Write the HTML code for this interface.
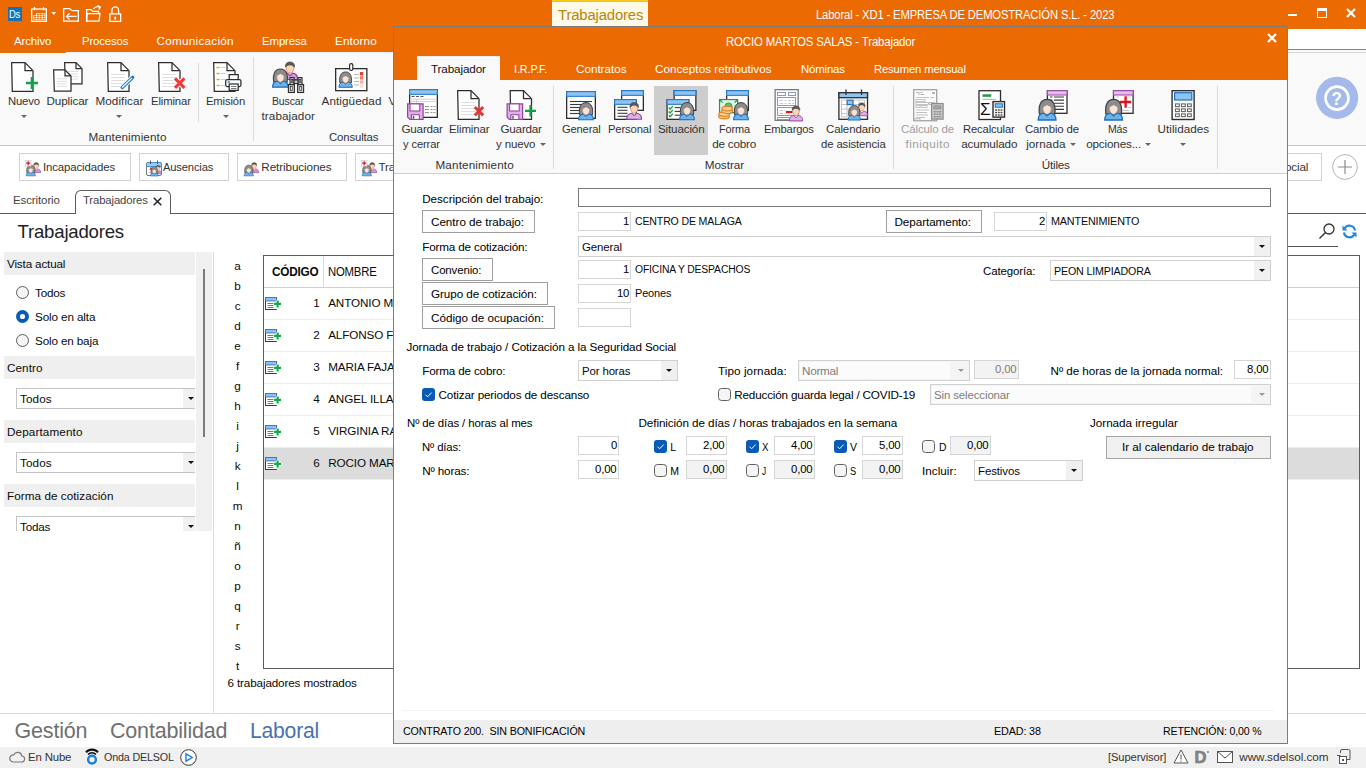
<!DOCTYPE html>
<html lang="es"><head><meta charset="utf-8"><title>Laboral - XD1 - EMPRESA DE DEMOSTRACIÓN S.L. - 2023</title>
<style>
html,body{margin:0;padding:0}
body{width:1366px;height:768px;overflow:hidden;position:relative;background:#fff;font-family:"Liberation Sans",sans-serif}
.r{position:absolute;box-sizing:border-box}
.t{position:absolute;white-space:pre;font-family:"Liberation Sans",sans-serif}
svg{overflow:visible}
</style></head><body>
<div class="r" style="left:0px;top:0px;width:1366px;height:52px;background:#eb6a02;"></div>
<div class="r" style="left:0px;top:52px;width:66px;height:1px;background:#eb6a02;"></div>
<div class="r" style="left:0px;top:52px;width:1366px;height:94px;background:#f9f9f9;"></div>
<div class="r" style="left:0px;top:52px;width:66px;height:1px;background:#eb6a02;"></div>
<div class="r" style="left:66px;top:52px;width:1300px;height:1px;background:#e6ecf3;"></div>
<div class="r" style="left:0px;top:145px;width:1366px;height:1px;background:#c8c8c8;"></div>
<div class="r" style="left:1150px;top:29px;width:216px;height:20px;background:#ffffff;"></div>
<div class="r" style="left:1150px;top:49px;width:216px;height:1px;background:#858585;"></div>
<div class="r" style="left:1150px;top:50px;width:216px;height:2px;background:#f9f9f9;"></div>
<div class="r" style="left:1150px;top:52px;width:216px;height:1px;background:#d4d4d4;"></div>
<div class="r" style="left:7.600px;top:6.600px;width:14.800px;height:14.600px;background:#1272b8"></div>
<span class="t" style="left:9.40px;top:9px;font-size:10px;line-height:11px;color:#fff;letter-spacing:-0.261px;transform:scaleX(0.9364);transform-origin:0 0;">Ds</span>
<svg class="r" style="left:31px;top:7px" width="26" height="16" viewBox="0 0 26 16"><g fill="none" stroke="#fff" stroke-width="1.300"><rect x="0.650" y="2" width="14.700" height="12.300"/><path d="M3.500 0v3.300M12.500 0v3.300"/></g><g stroke="#fff" stroke-opacity="0.750" stroke-width="0.900" fill="none"><path d="M5.500 6.600h8.500v6h-11.500v-4h3zM2.500 10.600h11.500M5.500 6.600v6M8.300 6.600v6M11.200 6.600v6M5.500 8.600h8.500"/></g><path d="M20.400 5h4.800l-2.400 2.900z" fill="#fff"/></svg>
<svg class="r" style="left:63px;top:7px" width="17" height="16" viewBox="0 0 17 16"><g fill="none" stroke="#fff" stroke-width="1.300"><path d="M0.650 14.200V1.700h6l2.400 2h6.300v10.500z"/><path d="M13.700 9.400H3.500M6.500 6.400l-3 3 3 3"/></g></svg>
<svg class="r" style="left:85px;top:5px" width="18" height="18" viewBox="0 0 18 18"><g fill="none" stroke="#fff" stroke-width="1.300"><path d="M1.600 16.200V4.700h4.600l1.800 1.700h5.600v2.200"/><path d="M1.600 16.200l0.500-7.600h12.900l-1 7.600z"/><path d="M8.500 4c1.300-2 3.800-2.900 6.300-1.900M12.600 0.600l2.700 1.400-1.400 2.600"/></g></svg>
<svg class="r" style="left:109px;top:5px" width="13" height="18" viewBox="0 0 13 18"><g fill="none" stroke="#fff" stroke-width="1.300"><rect x="0.850" y="8.900" width="10.800" height="7.500"/><path d="M2.900 8.900V5.400a3.350 3.600 0 0 1 6.700 0v3.500"/></g><rect x="5.300" y="11.700" width="1.800" height="2.800" fill="#fff"/></svg>
<div class="r" style="left:552px;top:0px;width:96px;height:2px;background:#f5c518;"></div>
<div class="r" style="left:552px;top:2px;width:96px;height:24px;background:#fff9e8;"></div>
<span class="t" style="left:557.50px;top:7px;font-size:15.2px;line-height:16px;color:#b8860b;letter-spacing:-0.165px;transform:scaleX(0.9807);transform-origin:0 0;">Trabajadores</span>
<span class="t" style="left:815.50px;top:9px;font-size:12.5px;line-height:13px;color:#fff;letter-spacing:-0.151px;transform:scaleX(0.8987);transform-origin:0 0;">Laboral - XD1 - EMPRESA DE DEMOSTRACIÓN S.L. - 2023</span>
<div class="r" style="left:1288px;top:14px;width:9px;height:2px;background:#fff;"></div>
<div class="r" style="left:1317px;top:8px;width:10px;height:10px;border:1px solid #fff;border-top-width:3px;"></div>
<svg class="r" style="left:1346px;top:8px" width="10" height="10" viewBox="0 0 10 10"><path d="M1 1l8 8M9 1l-8 8" stroke="#fff" stroke-width="2.2" fill="none"/></svg>
<span class="t" style="left:13.80px;top:34px;font-size:11.7px;line-height:13px;color:#fff;letter-spacing:-0.133px;transform:scaleX(0.9812);transform-origin:0 0;">Archivo</span>
<span class="t" style="left:81.50px;top:34px;font-size:11.7px;line-height:13px;color:#fff;letter-spacing:-0.143px;transform:scaleX(0.9734);transform-origin:0 0;">Procesos</span>
<span class="t" style="left:156.50px;top:34px;font-size:11.7px;line-height:13px;color:#fff;letter-spacing:0.278px;">Comunicación</span>
<span class="t" style="left:262.00px;top:34px;font-size:11.7px;line-height:13px;color:#fff;letter-spacing:-0.159px;transform:scaleX(0.9812);transform-origin:0 0;">Empresa</span>
<span class="t" style="left:335.00px;top:34px;font-size:11.7px;line-height:13px;color:#fff;letter-spacing:0.120px;">Entorno</span>
<svg class="r" style="left:11px;top:62px" width="28" height="30" viewBox="0 0 28 30"><path d="M0.650 0.650h13.35l8 8v20.7h-20.7z" fill="#fff" stroke="#2d2d2d" stroke-width="1.250"/><path d="M14 0.650v8h7.35" fill="none" stroke="#2d2d2d" stroke-width="1.250"/><path d="M21 15v12M15 21h12" stroke="#10a048" stroke-width="2.6" fill="none"/></svg>
<svg class="r" style="left:53px;top:62px" width="30" height="30" viewBox="0 0 30 30"><g transform="translate(11,0)"><path d="M0.650 0.650h11.35l6 6v15.2h-16.7z" fill="#fff" stroke="#2d2d2d" stroke-width="1.250"/><path d="M12 0.650v6h5.35" fill="none" stroke="#2d2d2d" stroke-width="1.250"/><path d="M4 9.5h10" stroke="#dedede" stroke-width="1"/><path d="M4 12.0h10" stroke="#dedede" stroke-width="1"/><path d="M4 14.5h10" stroke="#dedede" stroke-width="1"/><path d="M4 17.0h10" stroke="#dedede" stroke-width="1"/></g><g transform="translate(0,7.300)"><path d="M0.650 0.650h11.35l6 6v15.2h-16.7z" fill="#fff" stroke="#2d2d2d" stroke-width="1.250"/><path d="M12 0.650v6h5.35" fill="none" stroke="#2d2d2d" stroke-width="1.250"/><path d="M4 9.5h10" stroke="#dedede" stroke-width="1"/><path d="M4 12.0h10" stroke="#dedede" stroke-width="1"/><path d="M4 14.5h10" stroke="#dedede" stroke-width="1"/><path d="M4 17.0h10" stroke="#dedede" stroke-width="1"/></g></svg>
<svg class="r" style="left:107px;top:62px" width="30" height="30" viewBox="0 0 30 30"><path d="M0.650 0.650h13.35l8 8v20.7h-20.7z" fill="#fff" stroke="#2d2d2d" stroke-width="1.250"/><path d="M14 0.650v8h7.35" fill="none" stroke="#2d2d2d" stroke-width="1.250"/><path d="M4 12.5h14" stroke="#dedede" stroke-width="1"/><path d="M4 15.5h14" stroke="#dedede" stroke-width="1"/><path d="M4 18.5h14" stroke="#dedede" stroke-width="1"/><path d="M4 21.5h14" stroke="#dedede" stroke-width="1"/><path d="M4 24.5h14" stroke="#dedede" stroke-width="1"/><g stroke-linecap="round" fill="none"><path d="M15.200 25.400L25.600 15.400" stroke="#f9f9f9" stroke-width="5.400"/><path d="M15.200 25.400L25.600 15.400" stroke="#1e7fd0" stroke-width="3.400"/><path d="M15.600 25L24.600 16.400" stroke="#fff" stroke-width="1.300"/></g></svg>
<svg class="r" style="left:158px;top:62px" width="30" height="30" viewBox="0 0 30 30"><path d="M0.650 0.650h13.35l8 8v20.7h-20.7z" fill="#fff" stroke="#2d2d2d" stroke-width="1.250"/><path d="M14 0.650v8h7.35" fill="none" stroke="#2d2d2d" stroke-width="1.250"/><path d="M4 12.5h14" stroke="#dedede" stroke-width="1"/><path d="M4 15.5h14" stroke="#dedede" stroke-width="1"/><path d="M4 18.5h14" stroke="#dedede" stroke-width="1"/><path d="M4 21.5h14" stroke="#dedede" stroke-width="1"/><path d="M4 24.5h14" stroke="#dedede" stroke-width="1"/><path d="M17 16.400l9.400 9.400M26.400 16.400l-9.400 9.400" stroke="#f9f9f9" stroke-width="5" fill="none"/><path d="M17 16.400l9.400 9.400M26.400 16.400l-9.400 9.400" stroke="#ee3a3a" stroke-width="3.100" fill="none"/></svg>
<svg class="r" style="left:213px;top:62px" width="30" height="30" viewBox="0 0 30 30"><path d="M0.650 0.650h13.35l8 8v20.7h-20.7z" fill="#fff" stroke="#2d2d2d" stroke-width="1.250"/><path d="M14 0.650v8h7.35" fill="none" stroke="#2d2d2d" stroke-width="1.250"/><path d="M3.500 5.5h3" stroke="#f39a1e" stroke-width="1.400"/><path d="M7.500 5.5h5" stroke="#d0d0d0" stroke-width="1"/><path d="M3.500 11.5h3" stroke="#f39a1e" stroke-width="1.400"/><path d="M7.500 11.5h5" stroke="#d0d0d0" stroke-width="1"/><path d="M3.500 17.5h3" stroke="#f39a1e" stroke-width="1.400"/><path d="M7.500 17.5h5" stroke="#d0d0d0" stroke-width="1"/><path d="M3.500 23.5h3" stroke="#f39a1e" stroke-width="1.400"/><path d="M7.500 23.5h5" stroke="#d0d0d0" stroke-width="1"/><rect x="16.200" y="12.600" width="9" height="6" fill="#fff" stroke="#2d2d2d" stroke-width="1.250"/><rect x="12.700" y="17.600" width="15.200" height="7" rx="1.500" fill="#fff" stroke="#2d2d2d" stroke-width="1.250"/><rect x="16.200" y="22" width="9" height="6.400" fill="#fff" stroke="#2d2d2d" stroke-width="1.250"/><path d="M18 24.500h5.500M18 26.500h5.500" stroke="#555" stroke-width="0.800"/><path d="M14.500 20h2.600" stroke="#2f86d0" stroke-width="1.400"/></svg>
<span class="t" style="left:7.50px;top:94px;font-size:11.7px;line-height:13px;color:#333333;letter-spacing:-0.175px;transform:scaleX(0.9662);transform-origin:0 0;">Nuevo</span>
<span class="t" style="left:46.50px;top:94px;font-size:11.7px;line-height:13px;color:#333333;letter-spacing:-0.131px;">Duplicar</span>
<span class="t" style="left:95.50px;top:94px;font-size:11.7px;line-height:13px;color:#333333;letter-spacing:0.067px;">Modificar</span>
<span class="t" style="left:150.50px;top:94px;font-size:11.7px;line-height:13px;color:#333333;letter-spacing:-0.125px;transform:scaleX(0.9665);transform-origin:0 0;">Eliminar</span>
<span class="t" style="left:206.30px;top:94px;font-size:11.7px;line-height:13px;color:#333333;letter-spacing:-0.144px;transform:scaleX(0.9620);transform-origin:0 0;">Emisión</span>
<span class="t" style="left:271.50px;top:94px;font-size:11.7px;line-height:13px;color:#333333;letter-spacing:-0.162px;transform:scaleX(0.8988);transform-origin:0 0;">Buscar</span>
<span class="t" style="left:321.50px;top:94px;font-size:11.7px;line-height:13px;color:#333333;letter-spacing:0.089px;">Antigüedad</span>
<span class="t" style="left:261.50px;top:109px;font-size:11.7px;line-height:13px;color:#333333;letter-spacing:0.091px;">trabajador</span>
<span class="t" style="left:388.50px;top:94px;font-size:11.7px;line-height:13px;color:#333333;letter-spacing:0.098px;">Vida</span>
<span class="t" style="left:88.50px;top:130px;font-size:11.7px;line-height:13px;color:#333333;letter-spacing:0.105px;">Mantenimiento</span>
<span class="t" style="left:329.00px;top:130px;font-size:11.7px;line-height:13px;color:#333333;letter-spacing:-0.134px;transform:scaleX(0.9714);transform-origin:0 0;">Consultas</span>
<svg class="r" style="left:20.5px;top:114.8px" width="6" height="3" viewBox="0 0 6 3"><path d="M0 0h6l-3 3z" fill="#666"/></svg>
<svg class="r" style="left:116.3px;top:114.8px" width="6" height="3" viewBox="0 0 6 3"><path d="M0 0h6l-3 3z" fill="#666"/></svg>
<svg class="r" style="left:222.5px;top:114.8px" width="6" height="3" viewBox="0 0 6 3"><path d="M0 0h6l-3 3z" fill="#666"/></svg>
<div class="r" style="left:198px;top:63px;width:1px;height:59px;background:#dcdcdc;"></div>
<div class="r" style="left:253px;top:57px;width:1px;height:84px;background:#dcdcdc;"></div>
<svg class="r" style="left:272px;top:60px" width="34" height="34" viewBox="0 0 34 34"><g transform="translate(18,9.3) scale(1.05) translate(-8,-8)"><path d="M0.600 17.700c0-4.400 2.300-5.700 4.900-6l2.500 2.400 2.500-2.400c2.600 0.300 4.900 1.600 4.900 6z" fill="#c99ad6" stroke="#9a3fa8" stroke-width="1.100"/><path d="M4.300 6.600c0-2.300 1.500-3.800 3.700-3.800s3.700 1.500 3.700 3.800c0 2.700-1.600 5-3.700 5s-3.700-2.300-3.700-5z" fill="#fbd3bb" stroke="#d4875a" stroke-width="0.800"/><path d="M3.800 6c-0.600-3.200 1.400-5 4.200-5s4.800 1.800 4.200 5c-1-1.600-2.500-2.200-4.200-2.200s-3.200 0.600-4.200 2.200z" fill="#5a5a5a" stroke="#3a3a3a" stroke-width="0.500"/></g><g transform="translate(8.4,16.9) scale(1.06) translate(-8,-8)"><path d="M1.600 12.800C0.600 6 2.500 0.600 8 0.600S15.400 6 14.400 12.800z" fill="#8c8c8c" stroke="#3f3f3f" stroke-width="1"/><path d="M0.600 17.700c0-4.200 2.300-5.400 4.900-5.700l2.500 2.300 2.500-2.300c2.600 0.300 4.900 1.500 4.900 5.700z" fill="#6db3e8" stroke="#1f6fbf" stroke-width="1.100"/><path d="M4.700 8.200c0-2 1.300-3.400 3.300-3.400s3.300 1.400 3.300 3.400c0 2.400-1.400 4.600-3.300 4.600s-3.300-2.200-3.300-4.600z" fill="#fde3d3" stroke="#d9a488" stroke-width="0.500"/><path d="M4.600 6.600c1.600-0.200 2.800-0.800 3.500-1.700c0.700 0.900 1.900 1.500 3.300 1.700c-0.200-2-1.500-2.900-3.400-2.900s-3.200 0.900-3.400 2.900z" fill="#8c8c8c"/></g><g fill="#c9c9c9" stroke="#2d2d2d" stroke-width="1.100"><rect x="16.400" y="24.500" width="6" height="8"/><rect x="25.600" y="24.500" width="6" height="8"/><rect x="18" y="17.600" width="4" height="7"/><rect x="26" y="17.600" width="4" height="7"/><rect x="22" y="20" width="4" height="3.500"/></g><rect x="19.300" y="19.500" width="1.400" height="3" fill="#fff" stroke="#2d2d2d" stroke-width="0.700"/><rect x="27.300" y="19.500" width="1.400" height="3" fill="#fff" stroke="#2d2d2d" stroke-width="0.700"/><rect x="18.600" y="26.500" width="1.600" height="4" fill="#fff" stroke="#2d2d2d" stroke-width="0.700"/><rect x="27.800" y="26.500" width="1.600" height="4" fill="#fff" stroke="#2d2d2d" stroke-width="0.700"/></svg>
<svg class="r" style="left:335px;top:63px" width="33" height="30" viewBox="0 0 33 30"><rect x="0.650" y="5.650" width="31.200" height="22" fill="#fff" stroke="#2d2d2d" stroke-width="1.300"/><rect x="14.600" y="0.600" width="3.200" height="6.800" rx="1.500" fill="#fff" stroke="#2d2d2d" stroke-width="1.200"/><g transform="translate(10.6,15.6) scale(0.9) translate(-8,-8)"><path d="M1.600 12.800C0.600 6 2.500 0.600 8 0.600S15.400 6 14.400 12.800z" fill="#8c8c8c" stroke="#3f3f3f" stroke-width="1"/><path d="M0.600 17.700c0-4.200 2.300-5.400 4.900-5.700l2.500 2.300 2.500-2.300c2.600 0.300 4.900 1.500 4.900 5.700z" fill="#6db3e8" stroke="#1f6fbf" stroke-width="1.100"/><path d="M4.700 8.200c0-2 1.300-3.400 3.300-3.400s3.300 1.400 3.300 3.400c0 2.400-1.400 4.600-3.300 4.600s-3.300-2.200-3.300-4.600z" fill="#fde3d3" stroke="#d9a488" stroke-width="0.500"/><path d="M4.600 6.600c1.600-0.200 2.800-0.800 3.500-1.700c0.700 0.900 1.900 1.500 3.300 1.700c-0.200-2-1.500-2.900-3.400-2.900s-3.200 0.900-3.400 2.900z" fill="#8c8c8c"/></g><rect x="24.900" y="9" width="3.400" height="3.400" fill="#e0452c"/><rect x="24.900" y="13.200" width="3.400" height="3.400" fill="#ec7c62"/><rect x="24.900" y="17.300" width="3.400" height="3.400" fill="#f5b3a2"/><rect x="24.900" y="21.400" width="3.400" height="3.400" fill="#fbdcd2"/><path d="M19 11.500h5M19 15h5M19 18.500h5M19 22h5" stroke="#b8b8b8"/></svg>
<svg class="r" style="left:1316px;top:77px" width="42" height="42" viewBox="0 0 42 42"><circle cx="21.100" cy="20.800" r="21.100" fill="#a5baea"/><circle cx="21" cy="21.100" r="11.500" fill="none" stroke="#fff" stroke-width="2.600"/></svg>
<span class="t" style="left:1332.40px;top:92px;font-size:15px;line-height:16px;color:#fff;font-weight:700;transform:scale(1.12,1.24);transform-origin:4.580px 13px;">?</span>
<div class="r" style="left:19px;top:153px;width:112px;height:28px;background:#fff;border:1px solid #d2d2d2;"></div>
<span class="t" style="left:43.30px;top:160px;font-size:11.7px;line-height:13px;color:#333;letter-spacing:-0.129px;transform:scaleX(0.9768);transform-origin:0 0;">Incapacidades</span>
<div class="r" style="left:139px;top:153px;width:90px;height:28px;background:#fff;border:1px solid #d2d2d2;"></div>
<span class="t" style="left:163.30px;top:160px;font-size:11.7px;line-height:13px;color:#333;letter-spacing:-0.142px;transform:scaleX(0.9537);transform-origin:0 0;">Ausencias</span>
<div class="r" style="left:237px;top:153px;width:110px;height:28px;background:#fff;border:1px solid #d2d2d2;"></div>
<span class="t" style="left:261.30px;top:160px;font-size:11.7px;line-height:13px;color:#333;letter-spacing:-0.095px;">Retribuciones</span>
<div class="r" style="left:355px;top:153px;width:115px;height:28px;background:#fff;border:1px solid #d2d2d2;"></div>
<span class="t" style="left:378.50px;top:160px;font-size:11.7px;line-height:13px;color:#333;letter-spacing:-0.182px;">Trabajadores</span>
<div class="r" style="left:1200px;top:153px;width:122px;height:28px;background:#fff;border:1px solid #d2d2d2;"></div>
<span class="t" style="left:1222.00px;top:160px;font-size:11.7px;line-height:13px;color:#333;letter-spacing:-0.131px;">Seguridad Social</span>
<svg class="r" style="left:1332px;top:154px" width="26" height="26" viewBox="0 0 26 26"><circle cx="13" cy="13" r="12.400" fill="#fff" stroke="#b4b4b4" stroke-width="1"/><path d="M13 6v14M6 13h14" stroke="#8c8c8c" stroke-width="1.200"/></svg>
<svg class="r" style="left:25px;top:160px" width="16" height="16" viewBox="0 0 16 16"><g transform="translate(11.2,6.8) scale(0.6) translate(-8,-8)"><path d="M0.600 17.700c0-4.400 2.300-5.700 4.900-6l2.500 2.400 2.500-2.400c2.600 0.300 4.900 1.600 4.900 6z" fill="#c99ad6" stroke="#9a3fa8" stroke-width="1.100"/><path d="M4.300 6.600c0-2.300 1.500-3.800 3.700-3.800s3.700 1.500 3.700 3.800c0 2.700-1.600 5-3.700 5s-3.700-2.300-3.700-5z" fill="#fbd3bb" stroke="#d4875a" stroke-width="0.800"/><path d="M3.800 6c-0.600-3.200 1.400-5 4.200-5s4.800 1.800 4.200 5c-1-1.600-2.500-2.200-4.200-2.200s-3.200 0.600-4.200 2.200z" fill="#5a5a5a" stroke="#3a3a3a" stroke-width="0.500"/></g><g transform="translate(5.8,9.8) scale(0.62) translate(-8,-8)"><path d="M1.600 12.800C0.600 6 2.500 0.600 8 0.600S15.400 6 14.400 12.800z" fill="#8c8c8c" stroke="#3f3f3f" stroke-width="1"/><path d="M0.600 17.700c0-4.200 2.300-5.400 4.900-5.700l2.500 2.300 2.500-2.300c2.600 0.300 4.900 1.500 4.900 5.700z" fill="#6db3e8" stroke="#1f6fbf" stroke-width="1.100"/><path d="M4.700 8.200c0-2 1.300-3.400 3.300-3.400s3.300 1.400 3.300 3.400c0 2.400-1.400 4.600-3.300 4.600s-3.300-2.200-3.300-4.600z" fill="#fde3d3" stroke="#d9a488" stroke-width="0.500"/><path d="M4.600 6.600c1.600-0.200 2.800-0.800 3.500-1.700c0.700 0.900 1.900 1.500 3.300 1.700c-0.200-2-1.500-2.900-3.400-2.900s-3.200 0.900-3.400 2.900z" fill="#8c8c8c"/></g><rect x="0.400" y="0.400" width="5.600" height="5.600" fill="#fff" stroke="#c9c9c9" stroke-width="0.700"/><path d="M3.200 1.200v4M1.200 3.200h4" stroke="#e0101c" stroke-width="1.300"/></svg>
<svg class="r" style="left:146px;top:160px" width="16" height="16" viewBox="0 0 16 16"><rect x="0.500" y="2.500" width="15" height="13" rx="1.500" fill="#fff" stroke="#7a7a7a" stroke-width="1"/><path d="M0.500 6.500v-2.500a1.500 1.500 0 0 1 1.500-1.500h12a1.500 1.500 0 0 1 1.500 1.500v2.500z" fill="#9ccbf0" stroke="#4a8fd0" stroke-width="1"/><path d="M4.500 0.500v3.500M11.500 0.500v3.500" stroke="#555" stroke-width="1"/><path d="M2.500 9.500h4M2.500 12.500h3M5.500 7v8" stroke="#d0d0d0" stroke-width="0.800"/><rect x="4" y="7.500" width="3.200" height="2.400" fill="#e8353b"/><g transform="translate(12,8.8) scale(0.5) translate(-8,-8)"><path d="M0.600 17.700c0-4.400 2.300-5.700 4.900-6l2.500 2.400 2.500-2.400c2.600 0.300 4.900 1.600 4.900 6z" fill="#c99ad6" stroke="#9a3fa8" stroke-width="1.100"/><path d="M4.300 6.600c0-2.300 1.500-3.800 3.700-3.800s3.700 1.500 3.700 3.800c0 2.700-1.600 5-3.700 5s-3.700-2.300-3.700-5z" fill="#fbd3bb" stroke="#d4875a" stroke-width="0.800"/><path d="M3.800 6c-0.600-3.200 1.400-5 4.200-5s4.800 1.800 4.200 5c-1-1.600-2.500-2.200-4.200-2.200s-3.200 0.600-4.200 2.200z" fill="#5a5a5a" stroke="#3a3a3a" stroke-width="0.500"/></g><g transform="translate(8.3,11) scale(0.52) translate(-8,-8)"><path d="M1.600 12.800C0.600 6 2.500 0.600 8 0.600S15.400 6 14.400 12.800z" fill="#8c8c8c" stroke="#3f3f3f" stroke-width="1"/><path d="M0.600 17.700c0-4.200 2.300-5.400 4.900-5.700l2.500 2.300 2.500-2.300c2.600 0.300 4.900 1.500 4.900 5.700z" fill="#6db3e8" stroke="#1f6fbf" stroke-width="1.100"/><path d="M4.700 8.200c0-2 1.300-3.400 3.300-3.400s3.300 1.400 3.300 3.400c0 2.400-1.400 4.600-3.300 4.600s-3.300-2.200-3.300-4.600z" fill="#fde3d3" stroke="#d9a488" stroke-width="0.500"/><path d="M4.600 6.600c1.600-0.200 2.800-0.800 3.500-1.700c0.700 0.900 1.900 1.500 3.300 1.700c-0.200-2-1.500-2.900-3.400-2.900s-3.200 0.900-3.400 2.900z" fill="#8c8c8c"/></g></svg>
<svg class="r" style="left:243px;top:160px" width="16" height="16" viewBox="0 0 16 16"><g transform="translate(11.2,6.8) scale(0.6) translate(-8,-8)"><path d="M0.600 17.700c0-4.400 2.300-5.700 4.900-6l2.500 2.400 2.500-2.400c2.600 0.300 4.900 1.600 4.900 6z" fill="#c99ad6" stroke="#9a3fa8" stroke-width="1.100"/><path d="M4.300 6.600c0-2.300 1.500-3.800 3.700-3.800s3.700 1.500 3.700 3.800c0 2.700-1.600 5-3.700 5s-3.700-2.300-3.700-5z" fill="#fbd3bb" stroke="#d4875a" stroke-width="0.800"/><path d="M3.800 6c-0.600-3.200 1.400-5 4.200-5s4.800 1.800 4.200 5c-1-1.600-2.500-2.200-4.200-2.200s-3.200 0.600-4.200 2.200z" fill="#5a5a5a" stroke="#3a3a3a" stroke-width="0.500"/></g><g transform="translate(5.8,9.8) scale(0.62) translate(-8,-8)"><path d="M1.600 12.800C0.600 6 2.500 0.600 8 0.600S15.400 6 14.400 12.800z" fill="#8c8c8c" stroke="#3f3f3f" stroke-width="1"/><path d="M0.600 17.700c0-4.200 2.300-5.400 4.900-5.700l2.500 2.300 2.500-2.300c2.600 0.300 4.900 1.500 4.900 5.700z" fill="#6db3e8" stroke="#1f6fbf" stroke-width="1.100"/><path d="M4.700 8.200c0-2 1.300-3.400 3.300-3.400s3.300 1.400 3.300 3.400c0 2.400-1.400 4.600-3.300 4.600s-3.300-2.200-3.300-4.600z" fill="#fde3d3" stroke="#d9a488" stroke-width="0.500"/><path d="M4.600 6.600c1.600-0.200 2.800-0.800 3.500-1.700c0.700 0.900 1.900 1.500 3.300 1.700c-0.200-2-1.500-2.900-3.400-2.900s-3.200 0.900-3.400 2.900z" fill="#8c8c8c"/></g></svg>
<svg class="r" style="left:361px;top:160px" width="16" height="16" viewBox="0 0 16 16"><g transform="translate(11.2,6.8) scale(0.6) translate(-8,-8)"><path d="M0.600 17.700c0-4.400 2.300-5.700 4.900-6l2.500 2.400 2.500-2.400c2.600 0.300 4.900 1.600 4.900 6z" fill="#c99ad6" stroke="#9a3fa8" stroke-width="1.100"/><path d="M4.300 6.600c0-2.300 1.500-3.800 3.700-3.800s3.700 1.500 3.700 3.800c0 2.700-1.600 5-3.700 5s-3.700-2.300-3.700-5z" fill="#fbd3bb" stroke="#d4875a" stroke-width="0.800"/><path d="M3.800 6c-0.600-3.200 1.400-5 4.200-5s4.800 1.800 4.200 5c-1-1.600-2.500-2.200-4.200-2.200s-3.200 0.600-4.200 2.200z" fill="#5a5a5a" stroke="#3a3a3a" stroke-width="0.500"/></g><g transform="translate(5.8,9.8) scale(0.62) translate(-8,-8)"><path d="M1.600 12.800C0.600 6 2.500 0.600 8 0.600S15.400 6 14.400 12.800z" fill="#8c8c8c" stroke="#3f3f3f" stroke-width="1"/><path d="M0.600 17.700c0-4.200 2.300-5.400 4.900-5.700l2.500 2.300 2.500-2.300c2.600 0.300 4.900 1.500 4.900 5.700z" fill="#6db3e8" stroke="#1f6fbf" stroke-width="1.100"/><path d="M4.700 8.200c0-2 1.300-3.400 3.300-3.400s3.300 1.400 3.300 3.400c0 2.400-1.400 4.600-3.300 4.600s-3.300-2.200-3.300-4.600z" fill="#fde3d3" stroke="#d9a488" stroke-width="0.500"/><path d="M4.600 6.600c1.600-0.200 2.800-0.800 3.500-1.700c0.700 0.900 1.900 1.500 3.300 1.700c-0.200-2-1.500-2.900-3.400-2.900s-3.200 0.900-3.400 2.900z" fill="#8c8c8c"/></g><rect x="0.400" y="0.400" width="5.600" height="5.600" fill="#fff" stroke="#c9c9c9" stroke-width="0.700"/><path d="M3.200 1.200v4M1.200 3.200h4" stroke="#e0101c" stroke-width="1.300"/></svg>
<div class="r" style="left:0px;top:213px;width:1366px;height:1px;background:#5a5a5a;"></div>
<div class="r" style="left:75px;top:190px;width:96px;height:24px;background:#fff;border:1px solid #5a5a5a;border-bottom:none;border-radius:6px 6px 0 0"></div>
<span class="t" style="left:13.00px;top:193px;font-size:11.7px;line-height:13px;color:#444;letter-spacing:-0.110px;transform:scaleX(0.9839);transform-origin:0 0;">Escritorio</span>
<span class="t" style="left:83.30px;top:193px;font-size:11.7px;line-height:13px;color:#444;letter-spacing:-0.129px;transform:scaleX(0.9689);transform-origin:0 0;">Trabajadores</span>
<svg class="r" style="left:153px;top:197px" width="9" height="9" viewBox="0 0 9 9"><path d="M0.700 0.700l7.600 7.600M8.300 0.700l-7.600 7.600" stroke="#222" stroke-width="1.500" fill="none"/></svg>
<span class="t" style="left:17.50px;top:222px;font-size:18.6px;line-height:20px;color:#222;letter-spacing:-0.200px;">Trabajadores</span>
<div class="r" style="left:196px;top:252px;width:16px;height:279px;background:#f0f0f0;"></div>
<div class="r" style="left:203px;top:269px;width:2px;height:168px;background:#7c7c7c;"></div>
<div class="r" style="left:213px;top:252px;width:1px;height:461px;background:#dcdcdc;"></div>
<div class="r" style="left:4px;top:252px;width:191px;height:23px;background:#efefef;"></div>
<span class="t" style="left:7.00px;top:257px;font-size:11.7px;line-height:13px;color:#0a0a0a;letter-spacing:-0.161px;">Vista actual</span>
<div class="r" style="left:4px;top:356px;width:191px;height:23px;background:#efefef;"></div>
<span class="t" style="left:7.00px;top:361px;font-size:11.7px;line-height:13px;color:#0a0a0a;letter-spacing:0.077px;">Centro</span>
<div class="r" style="left:4px;top:420px;width:191px;height:23px;background:#efefef;"></div>
<span class="t" style="left:7.00px;top:425px;font-size:11.7px;line-height:13px;color:#0a0a0a;letter-spacing:0.123px;">Departamento</span>
<div class="r" style="left:4px;top:484px;width:191px;height:23px;background:#efefef;"></div>
<span class="t" style="left:7.00px;top:489px;font-size:11.7px;line-height:13px;color:#0a0a0a;letter-spacing:0.064px;">Forma de cotización</span>
<svg class="r" style="left:16px;top:286.2px" width="13" height="13" viewBox="0 0 13 13"><circle cx="6.500" cy="6.500" r="6" fill="#f4f4f4" stroke="#5a5a5a" stroke-width="1"/></svg>
<span class="t" style="left:35.00px;top:286px;font-size:11.7px;line-height:13px;color:#0a0a0a;letter-spacing:-0.180px;">Todos</span>
<svg class="r" style="left:16px;top:310.2px" width="13" height="13" viewBox="0 0 13 13"><circle cx="6.500" cy="6.500" r="6.500" fill="#0a5ab8"/><circle cx="6.500" cy="6.500" r="2.600" fill="#fff"/></svg>
<span class="t" style="left:35.00px;top:310px;font-size:11.7px;line-height:13px;color:#0a0a0a;letter-spacing:-0.118px;">Solo en alta</span>
<svg class="r" style="left:16px;top:334.2px" width="13" height="13" viewBox="0 0 13 13"><circle cx="6.500" cy="6.500" r="6" fill="#f4f4f4" stroke="#5a5a5a" stroke-width="1"/></svg>
<span class="t" style="left:35.00px;top:334px;font-size:11.7px;line-height:13px;color:#0a0a0a;letter-spacing:-0.141px;">Solo en baja</span>
<div class="r" style="left:16px;top:388px;width:179px;height:21px;background:#fff;border:1px solid #c4c4c4;border-right:none;"></div>
<div class="r" style="left:183px;top:389px;width:12px;height:19px;background:#f0f0f0;"></div>
<svg class="r" style="left:188px;top:397.0px" width="6" height="3" viewBox="0 0 6 3"><path d="M0 0h6l-3 3z" fill="#111"/></svg>
<span class="t" style="left:20.00px;top:392px;font-size:11.7px;line-height:13px;color:#0a0a0a;letter-spacing:0.120px;">Todos</span>
<div class="r" style="left:16px;top:452px;width:179px;height:21px;background:#fff;border:1px solid #c4c4c4;border-right:none;"></div>
<div class="r" style="left:183px;top:453px;width:12px;height:19px;background:#f0f0f0;"></div>
<svg class="r" style="left:188px;top:461.0px" width="6" height="3" viewBox="0 0 6 3"><path d="M0 0h6l-3 3z" fill="#111"/></svg>
<span class="t" style="left:20.00px;top:456px;font-size:11.7px;line-height:13px;color:#0a0a0a;letter-spacing:0.120px;">Todos</span>
<div class="r" style="left:16px;top:516px;width:179px;height:15px;background:#fff;border:1px solid #c4c4c4;border-right:none;border-bottom:none;"></div>
<div class="r" style="left:183px;top:517px;width:12px;height:14px;background:#f0f0f0;"></div>
<svg class="r" style="left:188px;top:525.0px" width="6" height="3" viewBox="0 0 6 3"><path d="M0 0h6l-3 3z" fill="#111"/></svg>
<span class="t" style="left:20.00px;top:520px;font-size:11.7px;line-height:13px;color:#0a0a0a;letter-spacing:-0.180px;">Todas</span>
<div class="r" style="left:0px;top:531px;width:213px;height:29px;background:#fff;"></div>
<span class="t" style="left:234.35px;top:259px;font-size:11.7px;line-height:13px;color:#0a0a0a;">a</span>
<span class="t" style="left:234.35px;top:279px;font-size:11.7px;line-height:13px;color:#0a0a0a;">b</span>
<span class="t" style="left:234.67px;top:299px;font-size:11.7px;line-height:13px;color:#0a0a0a;">c</span>
<span class="t" style="left:234.35px;top:319px;font-size:11.7px;line-height:13px;color:#0a0a0a;">d</span>
<span class="t" style="left:234.35px;top:339px;font-size:11.7px;line-height:13px;color:#0a0a0a;">e</span>
<span class="t" style="left:235.97px;top:359px;font-size:11.7px;line-height:13px;color:#0a0a0a;">f</span>
<span class="t" style="left:234.35px;top:379px;font-size:11.7px;line-height:13px;color:#0a0a0a;">g</span>
<span class="t" style="left:234.35px;top:399px;font-size:11.7px;line-height:13px;color:#0a0a0a;">h</span>
<span class="t" style="left:236.30px;top:419px;font-size:11.7px;line-height:13px;color:#0a0a0a;">i</span>
<span class="t" style="left:236.30px;top:439px;font-size:11.7px;line-height:13px;color:#0a0a0a;">j</span>
<span class="t" style="left:234.67px;top:459px;font-size:11.7px;line-height:13px;color:#0a0a0a;">k</span>
<span class="t" style="left:236.30px;top:479px;font-size:11.7px;line-height:13px;color:#0a0a0a;">l</span>
<span class="t" style="left:232.73px;top:499px;font-size:11.7px;line-height:13px;color:#0a0a0a;">m</span>
<span class="t" style="left:234.35px;top:519px;font-size:11.7px;line-height:13px;color:#0a0a0a;">n</span>
<span class="t" style="left:234.35px;top:539px;font-size:11.7px;line-height:13px;color:#0a0a0a;">ñ</span>
<span class="t" style="left:234.35px;top:559px;font-size:11.7px;line-height:13px;color:#0a0a0a;">o</span>
<span class="t" style="left:234.35px;top:579px;font-size:11.7px;line-height:13px;color:#0a0a0a;">p</span>
<span class="t" style="left:234.35px;top:599px;font-size:11.7px;line-height:13px;color:#0a0a0a;">q</span>
<span class="t" style="left:235.65px;top:619px;font-size:11.7px;line-height:13px;color:#0a0a0a;">r</span>
<span class="t" style="left:234.67px;top:639px;font-size:11.7px;line-height:13px;color:#0a0a0a;">s</span>
<span class="t" style="left:235.97px;top:659px;font-size:11.7px;line-height:13px;color:#0a0a0a;">t</span>
<div class="r" style="left:263px;top:255px;width:1097px;height:414px;background:#fff;border:1px solid #5c5c5c;"></div>
<div class="r" style="left:264px;top:287px;width:1095px;height:1px;background:#d0d0d0;"></div>
<div class="r" style="left:323px;top:256px;width:1px;height:31px;background:#dadada;"></div>
<span class="t" style="left:272.00px;top:266px;font-size:12px;line-height:13px;color:#0a0a0a;letter-spacing:-0.199px;font-weight:700;transform:scaleX(0.9796);transform-origin:0 0;">CÓDIGO</span>
<span class="t" style="left:328.20px;top:266px;font-size:12px;line-height:13px;color:#0a0a0a;letter-spacing:-0.223px;transform:scaleX(0.9465);transform-origin:0 0;">NOMBRE</span>
<div class="r" style="left:264px;top:319px;width:1095px;height:1px;background:#ececec;"></div>
<svg class="r" style="left:265px;top:297px" width="17" height="13" viewBox="0 0 17 13"><path d="M0.500 0.500v12h11" fill="none" stroke="#3a3a3a" stroke-width="1"/><rect x="1" y="0.500" width="10.500" height="11.500" fill="#fff"/><rect x="0.500" y="0.500" width="11" height="3.400" fill="#8ec5f0" stroke="#3a78c0" stroke-width="1"/><path d="M0.500 4v8.500h11" fill="none" stroke="#3a3a3a" stroke-width="1"/><path d="M2.500 6.500h6M2.500 8.500h6M2.500 10.500h6" stroke="#777" stroke-width="1"/><path d="M12.600 3.200v7.400M8.900 6.900h7.400" stroke="#fff" stroke-width="3.600"/><path d="M12.600 3.400v7M9.100 6.900h7" stroke="#18a84a" stroke-width="2.200"/></svg>
<span class="t" style="right:1046.30px;top:296px;font-size:11.7px;line-height:13px;color:#0a0a0a;">1</span>
<span class="t" style="left:328.20px;top:296px;font-size:11.7px;line-height:13px;color:#0a0a0a;letter-spacing:-0.116px;">ANTONIO MARTINEZ</span>
<div class="r" style="left:264px;top:351px;width:1095px;height:1px;background:#ececec;"></div>
<svg class="r" style="left:265px;top:329px" width="17" height="13" viewBox="0 0 17 13"><path d="M0.500 0.500v12h11" fill="none" stroke="#3a3a3a" stroke-width="1"/><rect x="1" y="0.500" width="10.500" height="11.500" fill="#fff"/><rect x="0.500" y="0.500" width="11" height="3.400" fill="#8ec5f0" stroke="#3a78c0" stroke-width="1"/><path d="M0.500 4v8.500h11" fill="none" stroke="#3a3a3a" stroke-width="1"/><path d="M2.500 6.500h6M2.500 8.500h6M2.500 10.500h6" stroke="#777" stroke-width="1"/><path d="M12.600 3.200v7.400M8.900 6.900h7.400" stroke="#fff" stroke-width="3.600"/><path d="M12.600 3.400v7M9.100 6.900h7" stroke="#18a84a" stroke-width="2.200"/></svg>
<span class="t" style="right:1046.30px;top:328px;font-size:11.7px;line-height:13px;color:#0a0a0a;">2</span>
<span class="t" style="left:328.20px;top:328px;font-size:11.7px;line-height:13px;color:#0a0a0a;letter-spacing:-0.122px;">ALFONSO FERNANDEZ</span>
<div class="r" style="left:264px;top:383px;width:1095px;height:1px;background:#ececec;"></div>
<svg class="r" style="left:265px;top:361px" width="17" height="13" viewBox="0 0 17 13"><path d="M0.500 0.500v12h11" fill="none" stroke="#3a3a3a" stroke-width="1"/><rect x="1" y="0.500" width="10.500" height="11.500" fill="#fff"/><rect x="0.500" y="0.500" width="11" height="3.400" fill="#8ec5f0" stroke="#3a78c0" stroke-width="1"/><path d="M0.500 4v8.500h11" fill="none" stroke="#3a3a3a" stroke-width="1"/><path d="M2.500 6.500h6M2.500 8.500h6M2.500 10.500h6" stroke="#777" stroke-width="1"/><path d="M12.600 3.200v7.400M8.900 6.900h7.400" stroke="#fff" stroke-width="3.600"/><path d="M12.600 3.400v7M9.100 6.900h7" stroke="#18a84a" stroke-width="2.200"/></svg>
<span class="t" style="right:1046.30px;top:360px;font-size:11.7px;line-height:13px;color:#0a0a0a;">3</span>
<span class="t" style="left:328.20px;top:360px;font-size:11.7px;line-height:13px;color:#0a0a0a;letter-spacing:-0.117px;">MARIA FAJARDO</span>
<div class="r" style="left:264px;top:415px;width:1095px;height:1px;background:#ececec;"></div>
<svg class="r" style="left:265px;top:393px" width="17" height="13" viewBox="0 0 17 13"><path d="M0.500 0.500v12h11" fill="none" stroke="#3a3a3a" stroke-width="1"/><rect x="1" y="0.500" width="10.500" height="11.500" fill="#fff"/><rect x="0.500" y="0.500" width="11" height="3.400" fill="#8ec5f0" stroke="#3a78c0" stroke-width="1"/><path d="M0.500 4v8.500h11" fill="none" stroke="#3a3a3a" stroke-width="1"/><path d="M2.500 6.500h6M2.500 8.500h6M2.500 10.500h6" stroke="#777" stroke-width="1"/><path d="M12.600 3.200v7.400M8.900 6.900h7.400" stroke="#fff" stroke-width="3.600"/><path d="M12.600 3.400v7M9.100 6.900h7" stroke="#18a84a" stroke-width="2.200"/></svg>
<span class="t" style="right:1046.30px;top:392px;font-size:11.7px;line-height:13px;color:#0a0a0a;">4</span>
<span class="t" style="left:328.20px;top:392px;font-size:11.7px;line-height:13px;color:#0a0a0a;letter-spacing:-0.112px;">ANGEL ILLAN</span>
<div class="r" style="left:264px;top:447px;width:1095px;height:1px;background:#ececec;"></div>
<svg class="r" style="left:265px;top:425px" width="17" height="13" viewBox="0 0 17 13"><path d="M0.500 0.500v12h11" fill="none" stroke="#3a3a3a" stroke-width="1"/><rect x="1" y="0.500" width="10.500" height="11.500" fill="#fff"/><rect x="0.500" y="0.500" width="11" height="3.400" fill="#8ec5f0" stroke="#3a78c0" stroke-width="1"/><path d="M0.500 4v8.500h11" fill="none" stroke="#3a3a3a" stroke-width="1"/><path d="M2.500 6.500h6M2.500 8.500h6M2.500 10.500h6" stroke="#777" stroke-width="1"/><path d="M12.600 3.200v7.400M8.900 6.900h7.400" stroke="#fff" stroke-width="3.600"/><path d="M12.600 3.400v7M9.100 6.900h7" stroke="#18a84a" stroke-width="2.200"/></svg>
<span class="t" style="right:1046.30px;top:424px;font-size:11.7px;line-height:13px;color:#0a0a0a;">5</span>
<span class="t" style="left:328.20px;top:424px;font-size:11.7px;line-height:13px;color:#0a0a0a;letter-spacing:-0.112px;">VIRGINIA RAMOS</span>
<div class="r" style="left:264px;top:479px;width:1095px;height:1px;background:#ececec;"></div>
<div class="r" style="left:264px;top:448px;width:1095px;height:31px;background:#dcdcdc;"></div>
<svg class="r" style="left:265px;top:457px" width="17" height="13" viewBox="0 0 17 13"><path d="M0.500 0.500v12h11" fill="none" stroke="#3a3a3a" stroke-width="1"/><rect x="1" y="0.500" width="10.500" height="11.500" fill="#fff"/><rect x="0.500" y="0.500" width="11" height="3.400" fill="#8ec5f0" stroke="#3a78c0" stroke-width="1"/><path d="M0.500 4v8.500h11" fill="none" stroke="#3a3a3a" stroke-width="1"/><path d="M2.500 6.500h6M2.500 8.500h6M2.500 10.500h6" stroke="#777" stroke-width="1"/><path d="M12.600 3.200v7.400M8.900 6.900h7.400" stroke="#fff" stroke-width="3.600"/><path d="M12.600 3.400v7M9.100 6.900h7" stroke="#18a84a" stroke-width="2.200"/></svg>
<span class="t" style="right:1046.30px;top:456px;font-size:11.7px;line-height:13px;color:#0a0a0a;">6</span>
<span class="t" style="left:328.20px;top:456px;font-size:11.7px;line-height:13px;color:#0a0a0a;letter-spacing:-0.117px;">ROCIO MARTOS SALAS</span>
<span class="t" style="left:227.50px;top:676px;font-size:11.7px;line-height:13px;color:#0a0a0a;letter-spacing:-0.138px;">6 trabajadores mostrados</span>
<svg class="r" style="left:1319px;top:223px" width="16" height="16" viewBox="0 0 16 16"><circle cx="10" cy="6" r="5" fill="none" stroke="#333" stroke-width="1.300"/><path d="M6.500 9.500l-6 6" stroke="#333" stroke-width="1.400"/></svg>
<div class="r" style="left:1150px;top:246px;width:188px;height:1px;background:#555;"></div>
<svg class="r" style="left:1342px;top:224px" width="15" height="15" viewBox="0 0 15 15"><g fill="none" stroke="#1e88e5" stroke-width="2.200"><path d="M13 6.500a5.600 5.600 0 0 0-10.500-1.800"/><path d="M2 8.500a5.600 5.600 0 0 0 10.500 1.800"/></g><path d="M0.500 1.500v5h5z" fill="#1e88e5"/><path d="M14.500 13.500v-5h-5z" fill="#1e88e5"/></svg>
<div class="r" style="left:0px;top:713px;width:1366px;height:1px;background:#dcdcdc;"></div>
<span class="t" style="left:14.50px;top:720px;font-size:21.5px;line-height:23px;color:#707070;letter-spacing:-0.183px;">Gestión</span>
<span class="t" style="left:110.00px;top:720px;font-size:21.5px;line-height:23px;color:#707070;letter-spacing:-0.185px;">Contabilidad</span>
<span class="t" style="left:250.00px;top:720px;font-size:21.5px;line-height:23px;color:#4672b4;letter-spacing:-0.243px;transform:scaleX(0.9848);transform-origin:0 0;">Laboral</span>
<div class="r" style="left:0px;top:747px;width:1366px;height:21px;background:#f0f0f0;"></div>
<svg class="r" style="left:9px;top:751px" width="16" height="12" viewBox="0 0 16 12"><path d="M4 11h8.500a3 3 0 0 0 0.300-6 4.200 4.200 0 0 0-8-1.200A3.600 3.600 0 0 0 4 11z" fill="none" stroke="#7a7a7a" stroke-width="1.200"/></svg>
<span class="t" style="left:28.20px;top:750px;font-size:11.7px;line-height:13px;color:#333;letter-spacing:-0.156px;transform:scaleX(0.9754);transform-origin:0 0;">En Nube</span>
<svg class="r" style="left:85px;top:749px" width="14" height="16" viewBox="0 0 14 16"><circle cx="7" cy="10.600" r="3.900" fill="none" stroke="#1e7fd6" stroke-width="2.400"/><path d="M3 5.600a5.400 5.400 0 0 1 8 0" fill="none" stroke="#111" stroke-width="1.500"/><path d="M1 3.300a8 8 0 0 1 12 0" fill="none" stroke="#111" stroke-width="2.100"/></svg>
<span class="t" style="left:103.70px;top:750px;font-size:11.7px;line-height:13px;color:#333;letter-spacing:-0.170px;transform:scaleX(0.9169);transform-origin:0 0;">Onda DELSOL</span>
<svg class="r" style="left:180px;top:749px" width="17" height="17" viewBox="0 0 17 17"><circle cx="8.500" cy="8.500" r="7.800" fill="#fff" stroke="#333" stroke-width="1"/><path d="M6 4.800v7.400l6.200-3.700z" fill="#fff" stroke="#1e7fd6" stroke-width="1.400"/></svg>
<span class="t" style="left:1107.50px;top:750px;font-size:11.7px;line-height:13px;color:#333;letter-spacing:-0.119px;transform:scaleX(0.9571);transform-origin:0 0;">[Supervisor]</span>
<svg class="r" style="left:1173px;top:749px" width="16" height="15" viewBox="0 0 16 15"><path d="M8 1l7 13h-14z" fill="#fff" stroke="#555" stroke-width="1"/><path d="M8 5.500v5M8 11.600v1.200" stroke="#555" stroke-width="1"/></svg>
<span class="t" style="left:1194.50px;top:749px;font-size:16.5px;line-height:17px;color:#808080;font-weight:700;-webkit-text-stroke:0.7px #808080;">D</span>
<div class="r" style="left:1207px;top:751px;width:2px;height:2px;background:#9a9a9a;"></div>
<svg class="r" style="left:1217px;top:751px" width="16" height="12" viewBox="0 0 16 12"><rect x="0.500" y="0.500" width="15" height="11" fill="#fff" stroke="#555"/><path d="M0.500 0.500l7.500 6.500 7.500-6.500" fill="none" stroke="#555"/></svg>
<span class="t" style="left:1239.30px;top:750px;font-size:11.7px;line-height:13px;color:#333;letter-spacing:-0.031px;">www.sdelsol.com</span>
<svg class="r" style="left:1336px;top:749px" width="15" height="15" viewBox="0 0 15 15"><path d="M4.500 4v-2a1.500 1.500 0 0 1 1.500-1.500h6.500a1.500 1.500 0 0 1 1.500 1.500v8.500h-3" fill="none" stroke="#555"/><path d="M1 6.500h3.500" stroke="#555"/><rect x="3.500" y="7.500" width="7" height="7" fill="#fff" stroke="#555"/><rect x="6" y="10" width="2" height="2" fill="#555"/></svg>
<div class="r" style="left:393px;top:26px;width:895px;height:718px;background:#fff;border:1px solid #7c7c7c;"></div>
<div class="r" style="left:394px;top:27px;width:893px;height:53px;background:#eb6a02;"></div>
<div class="r" style="left:394px;top:80px;width:893px;height:93px;background:#f9f9f9;"></div>
<div class="r" style="left:394px;top:173px;width:893px;height:1px;background:#cfcfcf;"></div>
<div class="r" style="left:394px;top:720px;width:893px;height:23px;background:#eeeeee;"></div>
<div class="r" style="left:402px;top:710px;width:872px;height:1px;background:#f3f3f3;"></div>
<span class="t" style="left:726.20px;top:36px;font-size:12.5px;line-height:13px;color:#fff;letter-spacing:-0.155px;transform:scaleX(0.9125);transform-origin:0 0;">ROCIO MARTOS SALAS - Trabajador</span>
<svg class="r" style="left:1267px;top:33px" width="10" height="10" viewBox="0 0 10 10"><path d="M1 1l8 8M9 1l-8 8" stroke="#fff" stroke-width="2.200" fill="none"/></svg>
<div class="r" style="left:417px;top:56px;width:83px;height:24px;background:#f9f9f9;border-top:1px solid #e4ebf3;border-left:1px solid #e4ebf3;"></div>
<span class="t" style="left:431.00px;top:62px;font-size:11.7px;line-height:13px;color:#111;letter-spacing:-0.127px;">Trabajador</span>
<span class="t" style="left:514.00px;top:62px;font-size:11.7px;line-height:13px;color:#fff;letter-spacing:-0.114px;transform:scaleX(0.9264);transform-origin:0 0;">I.R.P.F.</span>
<span class="t" style="left:576.00px;top:62px;font-size:11.7px;line-height:13px;color:#fff;letter-spacing:-0.016px;">Contratos</span>
<span class="t" style="left:655.00px;top:62px;font-size:11.7px;line-height:13px;color:#fff;letter-spacing:0.014px;">Conceptos retributivos</span>
<span class="t" style="left:800.50px;top:62px;font-size:11.7px;line-height:13px;color:#fff;letter-spacing:-0.158px;transform:scaleX(0.9731);transform-origin:0 0;">Nóminas</span>
<span class="t" style="left:873.70px;top:62px;font-size:11.7px;line-height:13px;color:#fff;letter-spacing:-0.145px;transform:scaleX(0.9631);transform-origin:0 0;">Resumen mensual</span>
<div class="r" style="left:553px;top:86px;width:1px;height:83px;background:#d9d9d9;"></div>
<div class="r" style="left:893px;top:86px;width:1px;height:83px;background:#d9d9d9;"></div>
<div class="r" style="left:1217px;top:86px;width:1px;height:83px;background:#d9d9d9;"></div>
<div class="r" style="left:654px;top:86px;width:54px;height:69px;background:#cdcdcd;"></div>
<span class="t" style="left:401.50px;top:122px;font-size:11.7px;line-height:13px;color:#333333;letter-spacing:-0.237px;">Guardar</span>
<span class="t" style="left:403.00px;top:137px;font-size:11.7px;line-height:13px;color:#333333;letter-spacing:-0.119px;transform:scaleX(0.9531);transform-origin:0 0;">y cerrar</span>
<span class="t" style="left:449.40px;top:122px;font-size:11.7px;line-height:13px;color:#333333;letter-spacing:-0.123px;transform:scaleX(0.9807);transform-origin:0 0;">Eliminar</span>
<span class="t" style="left:500.50px;top:122px;font-size:11.7px;line-height:13px;color:#333333;letter-spacing:-0.237px;">Guardar</span>
<span class="t" style="left:496.00px;top:137px;font-size:11.7px;line-height:13px;color:#333333;letter-spacing:-0.139px;transform:scaleX(0.9839);transform-origin:0 0;">y nuevo</span>
<span class="t" style="left:561.70px;top:122px;font-size:11.7px;line-height:13px;color:#333333;letter-spacing:-0.146px;transform:scaleX(0.9521);transform-origin:0 0;">General</span>
<span class="t" style="left:607.50px;top:122px;font-size:11.7px;line-height:13px;color:#333333;letter-spacing:-0.137px;transform:scaleX(0.9620);transform-origin:0 0;">Personal</span>
<span class="t" style="left:658.00px;top:122px;font-size:11.7px;line-height:13px;color:#333333;letter-spacing:-0.179px;">Situación</span>
<span class="t" style="left:718.70px;top:122px;font-size:11.7px;line-height:13px;color:#333333;letter-spacing:-0.180px;transform:scaleX(0.9371);transform-origin:0 0;">Forma</span>
<span class="t" style="left:712.20px;top:137px;font-size:11.7px;line-height:13px;color:#333333;letter-spacing:-0.219px;">de cobro</span>
<span class="t" style="left:763.70px;top:122px;font-size:11.7px;line-height:13px;color:#333333;letter-spacing:-0.159px;transform:scaleX(0.9577);transform-origin:0 0;">Embargos</span>
<span class="t" style="left:826.00px;top:122px;font-size:11.7px;line-height:13px;color:#333333;letter-spacing:-0.128px;transform:scaleX(0.9831);transform-origin:0 0;">Calendario</span>
<span class="t" style="left:821.20px;top:137px;font-size:11.7px;line-height:13px;color:#333333;letter-spacing:-0.117px;transform:scaleX(0.9689);transform-origin:0 0;">de asistencia</span>
<span class="t" style="left:963.20px;top:122px;font-size:11.7px;line-height:13px;color:#333333;letter-spacing:-0.128px;transform:scaleX(0.9572);transform-origin:0 0;">Recalcular</span>
<span class="t" style="left:961.20px;top:137px;font-size:11.7px;line-height:13px;color:#333333;letter-spacing:-0.117px;">acumulado</span>
<span class="t" style="left:1024.50px;top:122px;font-size:11.7px;line-height:13px;color:#333333;letter-spacing:-0.145px;transform:scaleX(0.9779);transform-origin:0 0;">Cambio de</span>
<span class="t" style="left:1026.20px;top:137px;font-size:11.7px;line-height:13px;color:#333333;letter-spacing:0.045px;">jornada</span>
<span class="t" style="left:1107.50px;top:122px;font-size:11.7px;line-height:13px;color:#333333;letter-spacing:-0.245px;transform:scaleX(0.9022);transform-origin:0 0;">Más</span>
<span class="t" style="left:1086.20px;top:137px;font-size:11.7px;line-height:13px;color:#333333;letter-spacing:-0.159px;">opciones...</span>
<span class="t" style="left:1157.50px;top:122px;font-size:11.7px;line-height:13px;color:#333333;letter-spacing:0.036px;">Utilidades</span>
<span class="t" style="left:901.20px;top:122px;font-size:11.7px;line-height:13px;color:#a0a0a0;letter-spacing:-0.125px;transform:scaleX(0.9841);transform-origin:0 0;">Cálculo de</span>
<span class="t" style="left:905.50px;top:137px;font-size:11.7px;line-height:13px;color:#a0a0a0;letter-spacing:0.459px;">finiquito</span>
<span class="t" style="left:435.50px;top:158px;font-size:11.7px;line-height:13px;color:#333333;letter-spacing:0.130px;">Mantenimiento</span>
<span class="t" style="left:704.70px;top:158px;font-size:11.7px;line-height:13px;color:#333333;letter-spacing:-0.026px;">Mostrar</span>
<span class="t" style="left:1041.70px;top:158px;font-size:11.7px;line-height:13px;color:#333333;letter-spacing:-0.191px;">Útiles</span>
<svg class="r" style="left:539.5px;top:143.0px" width="6" height="3" viewBox="0 0 6 3"><path d="M0 0h6l-3 3z" fill="#666"/></svg>
<svg class="r" style="left:1069.5px;top:143.0px" width="6" height="3" viewBox="0 0 6 3"><path d="M0 0h6l-3 3z" fill="#666"/></svg>
<svg class="r" style="left:1144.5px;top:143.0px" width="6" height="3" viewBox="0 0 6 3"><path d="M0 0h6l-3 3z" fill="#666"/></svg>
<svg class="r" style="left:1179.5px;top:143.0px" width="6" height="3" viewBox="0 0 6 3"><path d="M0 0h6l-3 3z" fill="#666"/></svg>
<svg class="r" style="left:407px;top:89px" width="32" height="32" viewBox="0 0 32 32"><rect x="2.65" y="0.65" width="27.7" height="27.7" fill="#fff" stroke="#2d2d2d" stroke-width="1.300"/><rect x="2.65" y="0.65" width="27.7" height="4.700" fill="#8ec5f0" stroke="#2a7bd0" stroke-width="1.100"/><path d="M4.500 7.500h3M9 7.500h3M13.500 7.500h3" stroke="#555" stroke-width="1.100"/><path d="M3 10.200h27M3 12.600h27M9.500 10.200v4" stroke="#cfcfcf"/><path d="M18 17.6h4M23.500 17.6h2M26.500 17.6h2" stroke="#8a8a8a"/><path d="M18 20.6h4M23.500 20.6h2M26.500 20.6h2" stroke="#8a8a8a"/><path d="M18 23.6h4M23.500 23.6h2M26.500 23.6h2" stroke="#8a8a8a"/><g transform="translate(0,14.300) scale(0.880)"><g><path d="M0.700 0.700h17.600v17.600h-15l-2.600-2.600z" fill="#dcb2e0" stroke="#9a3fa8" stroke-width="1.400"/><rect x="3.500" y="0.700" width="11" height="8" fill="#fff" stroke="#9a3fa8" stroke-width="1.200"/><rect x="5" y="13" width="9" height="5.300" fill="#fff" stroke="#9a3fa8" stroke-width="1.200"/><rect x="6.500" y="14.500" width="1.800" height="3" fill="#555"/></g></g></svg>
<svg class="r" style="left:457px;top:90px" width="30" height="30" viewBox="0 0 30 30"><path d="M0.650 0.650h13.35l8 8v20.7h-20.7z" fill="#fff" stroke="#2d2d2d" stroke-width="1.250"/><path d="M14 0.650v8h7.35" fill="none" stroke="#2d2d2d" stroke-width="1.250"/><path d="M4 12.5h14" stroke="#dedede" stroke-width="1"/><path d="M4 15.5h14" stroke="#dedede" stroke-width="1"/><path d="M4 18.5h14" stroke="#dedede" stroke-width="1"/><path d="M4 21.5h14" stroke="#dedede" stroke-width="1"/><path d="M4 24.5h14" stroke="#dedede" stroke-width="1"/><path d="M17.800 17l8.400 8.400M26.200 17l-8.400 8.400" stroke="#e8353b" stroke-width="3" fill="none"/></svg>
<svg class="r" style="left:506px;top:90px" width="32" height="31" viewBox="0 0 32 31"><g transform="translate(3.500,0)"><path d="M0.650 0.650h13.35l8 8v20.7h-20.7z" fill="#fff" stroke="#2d2d2d" stroke-width="1.250"/><path d="M14 0.650v8h7.35" fill="none" stroke="#2d2d2d" stroke-width="1.250"/></g><g transform="translate(0.500,13.300) scale(0.880)"><g><path d="M0.700 0.700h17.600v17.600h-15l-2.600-2.600z" fill="#dcb2e0" stroke="#9a3fa8" stroke-width="1.400"/><rect x="3.500" y="0.700" width="11" height="8" fill="#fff" stroke="#9a3fa8" stroke-width="1.200"/><rect x="5" y="13" width="9" height="5.300" fill="#fff" stroke="#9a3fa8" stroke-width="1.200"/><rect x="6.500" y="14.500" width="1.800" height="3" fill="#555"/></g></g><path d="M24.500 15v11.500M19 20.800h11" stroke="#10a048" stroke-width="2.200" fill="none"/></svg>
<svg class="r" style="left:566px;top:90px" width="31" height="31" viewBox="0 0 31 31"><rect x="0.65" y="1.65" width="28.7" height="26.7" fill="#fff" stroke="#2d2d2d" stroke-width="1.300"/><rect x="0.65" y="1.65" width="28.7" height="4.700" fill="#8ec5f0" stroke="#2a7bd0" stroke-width="1.100"/><path d="M4 11.500h22" stroke="#3a3a3a" stroke-width="1.100"/><path d="M4 14.5h12" stroke="#3a3a3a" stroke-width="1.100"/><path d="M4 17.5h12" stroke="#3a3a3a" stroke-width="1.100"/><path d="M4 20.5h12" stroke="#3a3a3a" stroke-width="1.100"/><path d="M4 23.5h12" stroke="#3a3a3a" stroke-width="1.100"/><g transform="translate(20,20) scale(1.0) translate(-8,-8)"><path d="M1.600 12.800C0.600 6 2.500 0.600 8 0.600S15.400 6 14.400 12.800z" fill="#8c8c8c" stroke="#3f3f3f" stroke-width="1"/><path d="M0.600 17.700c0-4.200 2.300-5.400 4.900-5.700l2.500 2.300 2.500-2.300c2.600 0.300 4.900 1.500 4.900 5.700z" fill="#6db3e8" stroke="#1f6fbf" stroke-width="1.100"/><path d="M4.700 8.200c0-2 1.300-3.400 3.300-3.400s3.300 1.400 3.300 3.400c0 2.400-1.400 4.600-3.300 4.600s-3.300-2.200-3.300-4.600z" fill="#fde3d3" stroke="#d9a488" stroke-width="0.500"/><path d="M4.600 6.600c1.600-0.200 2.800-0.800 3.500-1.700c0.700 0.900 1.900 1.500 3.300 1.700c-0.200-2-1.500-2.900-3.400-2.900s-3.200 0.900-3.400 2.900z" fill="#8c8c8c"/></g></svg>
<svg class="r" style="left:613px;top:89px" width="32" height="32" viewBox="0 0 32 32"><rect x="8.65" y="1.65" width="21.7" height="19.7" fill="#fff" stroke="#2d2d2d" stroke-width="1.300"/><rect x="8.65" y="1.65" width="21.7" height="4.700" fill="#8ec5f0" stroke="#2a7bd0" stroke-width="1.100"/><rect x="1.65" y="10.65" width="21.7" height="19.7" fill="#fff" stroke="#2d2d2d" stroke-width="1.300"/><rect x="1.65" y="10.65" width="21.7" height="4.700" fill="#8ec5f0" stroke="#2a7bd0" stroke-width="1.100"/><path d="M4.500 18.3h10" stroke="#3a3a3a" stroke-width="1.100"/><path d="M4.500 21.3h10" stroke="#3a3a3a" stroke-width="1.100"/><path d="M4.500 24.3h10" stroke="#3a3a3a" stroke-width="1.100"/><path d="M4.500 27.3h10" stroke="#3a3a3a" stroke-width="1.100"/><g transform="translate(21.2,20.5) scale(1.0) translate(-8,-8)"><path d="M0.600 17.700c0-4.400 2.300-5.700 4.900-6l2.500 2.400 2.500-2.400c2.600 0.300 4.900 1.600 4.900 6z" fill="#dcb2e0" stroke="#9a3fa8" stroke-width="1.100"/><path d="M4.300 6.600c0-2.300 1.500-3.800 3.700-3.800s3.700 1.500 3.700 3.800c0 2.700-1.600 5-3.700 5s-3.700-2.300-3.700-5z" fill="#fbd3bb" stroke="#d4875a" stroke-width="0.800"/><path d="M3.800 6c-0.600-3.200 1.400-5 4.200-5s4.800 1.800 4.200 5c-1-1.600-2.500-2.200-4.200-2.200s-3.200 0.600-4.200 2.200z" fill="#5a5a5a" stroke="#3a3a3a" stroke-width="0.500"/></g></svg>
<svg class="r" style="left:666px;top:89px" width="32" height="32" viewBox="0 0 32 32"><rect x="8.15" y="1.65" width="21.7" height="19.7" fill="#fff" stroke="#2d2d2d" stroke-width="1.300"/><rect x="8.15" y="1.65" width="21.7" height="4.700" fill="#8ec5f0" stroke="#2a7bd0" stroke-width="1.100"/><rect x="1.05" y="10.65" width="21.7" height="19.7" fill="#fff" stroke="#2d2d2d" stroke-width="1.300"/><rect x="1.05" y="10.65" width="21.7" height="4.700" fill="#8ec5f0" stroke="#2a7bd0" stroke-width="1.100"/><path d="M2.800 18.6l1.400 1.500 2.600-3" stroke="#25a244" stroke-width="1.400" fill="none"/><path d="M8.800 18.6h5.500" stroke="#3a3a3a" stroke-width="1.100"/><path d="M2.800 22.400000000000002l1.400 1.500 2.600-3" stroke="#25a244" stroke-width="1.400" fill="none"/><path d="M8.800 22.400000000000002h5.500" stroke="#3a3a3a" stroke-width="1.100"/><path d="M2.800 26.200000000000003l1.400 1.500 2.600-3" stroke="#25a244" stroke-width="1.400" fill="none"/><path d="M8.800 26.200000000000003h5.500" stroke="#3a3a3a" stroke-width="1.100"/><g transform="translate(21,21) scale(1.0) translate(-8,-8)"><path d="M1.600 12.800C0.600 6 2.500 0.600 8 0.600S15.400 6 14.400 12.800z" fill="#8c8c8c" stroke="#3f3f3f" stroke-width="1"/><path d="M0.600 17.700c0-4.200 2.300-5.400 4.900-5.700l2.500 2.300 2.500-2.300c2.600 0.300 4.900 1.500 4.900 5.700z" fill="#6db3e8" stroke="#1f6fbf" stroke-width="1.100"/><path d="M4.700 8.200c0-2 1.300-3.400 3.300-3.400s3.300 1.400 3.300 3.400c0 2.400-1.400 4.600-3.300 4.600s-3.300-2.200-3.300-4.600z" fill="#fde3d3" stroke="#d9a488" stroke-width="0.500"/><path d="M4.600 6.600c1.600-0.200 2.800-0.800 3.500-1.700c0.700 0.900 1.900 1.500 3.300 1.700c-0.200-2-1.500-2.900-3.400-2.900s-3.200 0.900-3.400 2.900z" fill="#8c8c8c"/></g></svg>
<svg class="r" style="left:718px;top:89px" width="32" height="32" viewBox="0 0 32 32"><rect x="8.65" y="1.65" width="21.7" height="19.7" fill="#fff" stroke="#2d2d2d" stroke-width="1.300"/><rect x="8.65" y="1.65" width="21.7" height="4.700" fill="#8ec5f0" stroke="#2a7bd0" stroke-width="1.100"/><rect x="1.600" y="10.600" width="18" height="13" fill="#fff" stroke="#1f9a45" stroke-width="1.300"/><rect x="3.400" y="12.400" width="14.400" height="9.400" fill="#d9f2df"/><circle cx="10.500" cy="17.500" r="3.600" fill="#59bf74" stroke="#1f9a45" stroke-width="0.800"/><path d="M2 11l2.500 2.500M19.200 11l-2.500 2.500" stroke="#1f9a45" stroke-width="1.200"/><ellipse cx="6" cy="27.600" rx="5.400" ry="2.300" fill="#fbd08a" stroke="#e57a1e" stroke-width="1.100"/><ellipse cx="6.200" cy="25" rx="5.400" ry="2.300" fill="#fbd08a" stroke="#e57a1e" stroke-width="1.100"/><ellipse cx="9" cy="22.200" rx="5.400" ry="2.300" fill="#fbd08a" stroke="#e57a1e" stroke-width="1.100"/><ellipse cx="9.200" cy="19.600" rx="5.400" ry="2.300" fill="#fbd08a" stroke="#e57a1e" stroke-width="1.100"/><g transform="translate(23,21) scale(1.0) translate(-8,-8)"><path d="M1.600 12.800C0.600 6 2.500 0.600 8 0.600S15.400 6 14.400 12.800z" fill="#8c8c8c" stroke="#3f3f3f" stroke-width="1"/><path d="M0.600 17.700c0-4.200 2.300-5.400 4.900-5.700l2.500 2.300 2.500-2.300c2.600 0.300 4.900 1.500 4.900 5.700z" fill="#6db3e8" stroke="#1f6fbf" stroke-width="1.100"/><path d="M4.700 8.200c0-2 1.300-3.400 3.300-3.400s3.300 1.400 3.300 3.400c0 2.400-1.400 4.600-3.300 4.600s-3.300-2.200-3.300-4.600z" fill="#fde3d3" stroke="#d9a488" stroke-width="0.500"/><path d="M4.600 6.600c1.600-0.200 2.800-0.800 3.500-1.700c0.700 0.900 1.900 1.500 3.300 1.700c-0.200-2-1.500-2.900-3.400-2.900s-3.200 0.900-3.400 2.900z" fill="#8c8c8c"/></g></svg>
<svg class="r" style="left:774px;top:88px" width="30" height="34" viewBox="0 0 30 34"><rect x="1.150" y="1.650" width="23" height="30.700" fill="#fff" stroke="#7a7a7a" stroke-width="1.300"/><g fill="none" stroke="#8a9bb5" stroke-width="1"><rect x="3.500" y="4.500" width="8" height="3"/><rect x="14.500" y="4.500" width="7" height="3"/><rect x="3.500" y="9.500" width="18" height="8"/><rect x="3.500" y="19.500" width="18" height="8"/><rect x="3.500" y="29.500" width="18" height="2"/></g><path d="M5.500 12.5h3.500M10.500 12.5h2M14 12.5h3M18 12.5h2" stroke="#c3ccdb" stroke-width="1"/><path d="M5.500 15.5h3.500M10.500 15.5h2M14 15.5h3M18 15.5h2" stroke="#c3ccdb" stroke-width="1"/><path d="M5.500 22.5h3.500M10.500 22.5h1.500" stroke="#c3ccdb" stroke-width="1"/><path d="M5.500 25.5h3.500M10.500 25.5h1.500" stroke="#c3ccdb" stroke-width="1"/><rect x="12" y="23" width="6.500" height="2.200" fill="#e0101c"/><g transform="translate(22,24.2) scale(0.9) translate(-8,-8)"><path d="M0.600 17.700c0-4.400 2.300-5.700 4.900-6l2.500 2.400 2.500-2.400c2.600 0.300 4.900 1.600 4.900 6z" fill="#dcb2e0" stroke="#9a3fa8" stroke-width="1.100"/><path d="M4.300 6.600c0-2.300 1.500-3.800 3.700-3.800s3.700 1.500 3.700 3.800c0 2.700-1.600 5-3.700 5s-3.700-2.300-3.700-5z" fill="#fbd3bb" stroke="#d4875a" stroke-width="0.800"/><path d="M3.800 6c-0.600-3.200 1.400-5 4.200-5s4.800 1.800 4.200 5c-1-1.600-2.500-2.200-4.200-2.200s-3.200 0.600-4.200 2.200z" fill="#5a5a5a" stroke="#3a3a3a" stroke-width="0.500"/></g></svg>
<svg class="r" style="left:838px;top:90px" width="31" height="32" viewBox="0 0 31 32"><rect x="0.900" y="2.700" width="28.600" height="26.600" fill="#fff" stroke="#2d2d2d" stroke-width="1.300"/><rect x="0.900" y="2.700" width="28.600" height="5" fill="#8ec5f0" stroke="#2d2d2d" stroke-width="1.300"/><path d="M8 -0.500v5.500M23.500 -0.500v5.500" stroke="#2d2d2d" stroke-width="1.300"/><path d="M3.500 14.500h23M3.500 19h8M3.500 23.500h6M3.500 10v17h6M9 10v17M15 10v6M21 10v4M26.500 10v4.500M3.500 10h23" stroke="#c4c4c4" fill="none"/><rect x="9.200" y="10.200" width="5.800" height="4.400" fill="#8ec5f0" stroke="#1e6fc0" stroke-width="1.100"/><g transform="translate(23.8,18.2) scale(0.78) translate(-8,-8)"><path d="M0.600 17.700c0-4.400 2.300-5.700 4.900-6l2.500 2.400 2.500-2.400c2.600 0.300 4.900 1.600 4.900 6z" fill="#dcb2e0" stroke="#9a3fa8" stroke-width="1.100"/><path d="M4.300 6.600c0-2.300 1.500-3.800 3.700-3.800s3.700 1.500 3.700 3.800c0 2.700-1.600 5-3.700 5s-3.700-2.300-3.700-5z" fill="#fbd3bb" stroke="#d4875a" stroke-width="0.800"/><path d="M3.800 6c-0.600-3.200 1.400-5 4.200-5s4.800 1.800 4.200 5c-1-1.600-2.500-2.200-4.200-2.200s-3.200 0.600-4.200 2.200z" fill="#5a5a5a" stroke="#3a3a3a" stroke-width="0.500"/></g><g transform="translate(16.3,21.8) scale(0.85) translate(-8,-8)"><path d="M1.600 12.800C0.600 6 2.500 0.600 8 0.600S15.400 6 14.400 12.800z" fill="#8c8c8c" stroke="#3f3f3f" stroke-width="1"/><path d="M0.600 17.700c0-4.200 2.300-5.400 4.900-5.700l2.500 2.300 2.500-2.300c2.600 0.300 4.900 1.500 4.900 5.700z" fill="#6db3e8" stroke="#1f6fbf" stroke-width="1.100"/><path d="M4.700 8.200c0-2 1.300-3.400 3.300-3.400s3.300 1.400 3.300 3.400c0 2.400-1.400 4.600-3.300 4.600s-3.300-2.200-3.300-4.600z" fill="#fde3d3" stroke="#d9a488" stroke-width="0.500"/><path d="M4.600 6.600c1.600-0.200 2.800-0.800 3.500-1.700c0.700 0.900 1.900 1.500 3.300 1.700c-0.200-2-1.500-2.900-3.400-2.900s-3.200 0.900-3.400 2.900z" fill="#8c8c8c"/></g></svg>
<svg class="r" style="left:913px;top:89px" width="32" height="33" viewBox="0 0 32 33"><rect x="0.700" y="0.700" width="23" height="31" fill="#fcfcfc" stroke="#a2a2a2" stroke-width="1.300"/><path d="M3 3.500h3v2.500M7.500 3.500h2M7.500 5.500h3.500" stroke="#b0b0b0" fill="none"/><rect x="19" y="3" width="3" height="2" fill="#b5b5b5"/><path d="M3 8.500h13M17.500 8.500h4" stroke="#c2c2c2"/><g fill="none" stroke="#bdbdbd" stroke-width="0.900"><rect x="3" y="10.500" width="9" height="2"/><rect x="3" y="13.500" width="12.500" height="2"/><rect x="16.500" y="13.500" width="5" height="2"/><rect x="3" y="16.500" width="4" height="2"/><rect x="8" y="16.500" width="6" height="2"/></g><path d="M3 21.0h13" stroke="#c2c2c2"/><path d="M3 23.5h11" stroke="#c2c2c2"/><path d="M3 26.0h12" stroke="#c2c2c2"/><path d="M3 28.5h9" stroke="#c2c2c2"/><rect x="2" y="29.500" width="5" height="1.600" fill="none" stroke="#bdbdbd" stroke-width="0.800"/><rect x="18.600" y="14.600" width="11.500" height="15.500" fill="#cbcbcb" stroke="#8e8e8e" stroke-width="1.300"/><rect x="20.800" y="16.800" width="7.200" height="3.200" fill="#a3a3a3" stroke="#8e8e8e" stroke-width="0.600"/><rect x="20.8" y="22.0" width="1.900" height="1.400" fill="#8a8a8a"/><rect x="23.5" y="22.0" width="1.900" height="1.400" fill="#8a8a8a"/><rect x="26.200000000000003" y="22.0" width="1.900" height="1.400" fill="#8a8a8a"/><rect x="20.8" y="24.5" width="1.900" height="1.400" fill="#8a8a8a"/><rect x="23.5" y="24.5" width="1.900" height="1.400" fill="#8a8a8a"/><rect x="26.200000000000003" y="24.5" width="1.900" height="1.400" fill="#8a8a8a"/><rect x="20.8" y="27.0" width="1.900" height="1.400" fill="#8a8a8a"/><rect x="23.5" y="27.0" width="1.900" height="1.400" fill="#8a8a8a"/><rect x="26.200000000000003" y="27.0" width="1.900" height="1.400" fill="#8a8a8a"/></svg>
<svg class="r" style="left:978px;top:90px" width="28" height="30" viewBox="0 0 28 30"><rect x="1" y="0.700" width="21.500" height="28.800" fill="#fff" stroke="#2d2d2d" stroke-width="1.300"/><rect x="4.500" y="4.300" width="8.800" height="2.500" fill="#1f9a45"/><path d="M4.500 9.400h13.500" stroke="#b5b5b5"/><rect x="15" y="11.600" width="11.500" height="15.500" fill="#fff" stroke="#2d2d2d" stroke-width="1.400"/><rect x="17.200" y="13.800" width="7.200" height="3.400" fill="#8ec5f0" stroke="#1e6fc0" stroke-width="1"/><rect x="17.1" y="19.3" width="1.900" height="1.400" fill="#444"/><rect x="19.8" y="19.3" width="1.900" height="1.400" fill="#444"/><rect x="22.5" y="19.3" width="1.900" height="1.400" fill="#444"/><rect x="17.1" y="21.8" width="1.900" height="1.400" fill="#444"/><rect x="19.8" y="21.8" width="1.900" height="1.400" fill="#444"/><rect x="22.5" y="21.8" width="1.900" height="1.400" fill="#444"/><rect x="17.1" y="24.3" width="1.900" height="1.400" fill="#444"/><rect x="19.8" y="24.3" width="1.900" height="1.400" fill="#444"/><rect x="22.5" y="24.3" width="1.900" height="1.400" fill="#444"/></svg>
<span class="t" style="left:980.00px;top:101px;font-size:17px;line-height:18px;color:#111;font-family:"Liberation Serif",serif;">Σ</span>
<svg class="r" style="left:1037px;top:90px" width="31" height="31" viewBox="0 0 31 31"><rect x="10.4" y="0.700" width="19.600" height="22.600" fill="#fff" stroke="#2d2d2d" stroke-width="1.300"/><rect x="10.4" y="0.700" width="19.600" height="4.300" fill="#e3c0e6" stroke="#a24db0" stroke-width="1.100"/><path d="M13 7.0h2.500M17 7.0h10" stroke="#3a3a3a" stroke-width="1.100"/><path d="M13 10.1h2.500M17 10.1h10" stroke="#3a3a3a" stroke-width="1.100"/><path d="M13 13.2h2.500M17 13.2h10" stroke="#3a3a3a" stroke-width="1.100"/><path d="M13 16.3h2.500M17 16.3h10" stroke="#3a3a3a" stroke-width="1.100"/><path d="M13 19.4h2.500M17 19.4h10" stroke="#3a3a3a" stroke-width="1.100"/><g transform="translate(10.1,18.35) scale(1.2) translate(-8,-8)"><path d="M1.600 12.800C0.600 6 2.500 0.600 8 0.600S15.400 6 14.400 12.800z" fill="#8c8c8c" stroke="#3f3f3f" stroke-width="1"/><path d="M0.600 17.700c0-4.200 2.300-5.400 4.900-5.700l2.500 2.300 2.500-2.300c2.600 0.300 4.900 1.500 4.900 5.700z" fill="#6db3e8" stroke="#1f6fbf" stroke-width="1.100"/><path d="M4.700 8.200c0-2 1.300-3.400 3.300-3.400s3.300 1.400 3.300 3.400c0 2.400-1.400 4.600-3.300 4.600s-3.300-2.200-3.300-4.600z" fill="#fde3d3" stroke="#d9a488" stroke-width="0.500"/><path d="M4.600 6.600c1.600-0.200 2.800-0.800 3.500-1.700c0.700 0.900 1.900 1.500 3.300 1.700c-0.200-2-1.500-2.900-3.400-2.900s-3.200 0.900-3.400 2.900z" fill="#8c8c8c"/></g></svg>
<svg class="r" style="left:1104px;top:90px" width="31" height="31" viewBox="0 0 31 31"><rect x="9.5" y="0.700" width="19.600" height="22.600" fill="#fff" stroke="#2d2d2d" stroke-width="1.300"/><rect x="9.5" y="0.700" width="19.600" height="4.300" fill="#e3c0e6" stroke="#a24db0" stroke-width="1.100"/><path d="M12 7h3M24 7h3M12 17.500h3M24 17.500h3M14 20.500h11" stroke="#c9c9c9"/><path d="M21.600 6.200v11.600M16 12h11.200" stroke="#e0101c" stroke-width="2.300"/><g transform="translate(9.6,18.35) scale(1.2) translate(-8,-8)"><path d="M1.600 12.800C0.600 6 2.500 0.600 8 0.600S15.400 6 14.400 12.800z" fill="#8c8c8c" stroke="#3f3f3f" stroke-width="1"/><path d="M0.600 17.700c0-4.200 2.300-5.400 4.900-5.700l2.500 2.300 2.500-2.300c2.600 0.300 4.900 1.500 4.900 5.700z" fill="#6db3e8" stroke="#1f6fbf" stroke-width="1.100"/><path d="M4.700 8.200c0-2 1.300-3.400 3.300-3.400s3.300 1.400 3.300 3.400c0 2.400-1.400 4.600-3.300 4.600s-3.300-2.200-3.300-4.600z" fill="#fde3d3" stroke="#d9a488" stroke-width="0.500"/><path d="M4.600 6.600c1.600-0.200 2.800-0.800 3.500-1.700c0.700 0.900 1.900 1.500 3.300 1.700c-0.200-2-1.500-2.900-3.400-2.900s-3.200 0.900-3.400 2.900z" fill="#8c8c8c"/></g></svg>
<svg class="r" style="left:1171px;top:90px" width="24" height="30" viewBox="0 0 24 30"><rect x="1.100" y="0.700" width="22" height="28.800" fill="#fff" stroke="#2d2d2d" stroke-width="1.400"/><rect x="3.600" y="2.700" width="17.200" height="7.300" fill="#8ec5f0" stroke="#1e6fc0" stroke-width="1.200"/><rect x="4.5" y="13.9" width="3.800" height="2.700" fill="#fff" stroke="#666" stroke-width="1.100"/><rect x="10.5" y="13.9" width="3.800" height="2.700" fill="#fff" stroke="#666" stroke-width="1.100"/><rect x="16.5" y="13.9" width="3.800" height="2.700" fill="#fff" stroke="#666" stroke-width="1.100"/><rect x="4.5" y="18.9" width="3.800" height="2.700" fill="#fff" stroke="#666" stroke-width="1.100"/><rect x="10.5" y="18.9" width="3.800" height="2.700" fill="#fff" stroke="#666" stroke-width="1.100"/><rect x="16.5" y="18.9" width="3.800" height="2.700" fill="#fff" stroke="#666" stroke-width="1.100"/><rect x="4.5" y="23.9" width="3.800" height="2.700" fill="#fff" stroke="#666" stroke-width="1.100"/><rect x="10.5" y="23.9" width="3.800" height="2.700" fill="#fff" stroke="#666" stroke-width="1.100"/><rect x="16.5" y="23.9" width="3.800" height="2.700" fill="#fff" stroke="#666" stroke-width="1.100"/></svg>
<span class="t" style="left:422.20px;top:192px;font-size:11.7px;line-height:13px;color:#000000;letter-spacing:-0.042px;">Descripción del trabajo:</span>
<div class="r" style="left:578px;top:188px;width:693px;height:19px;background:#fff;border:1px solid #7a7a7a;"></div>
<div class="r" style="left:422px;top:210px;width:113px;height:23px;background:#fdfdfd;border:1px solid #9f9f9f;"></div>
<span class="t" style="left:431.00px;top:215px;font-size:11.7px;line-height:13px;color:#000000;letter-spacing:-0.039px;">Centro de trabajo:</span>
<div class="r" style="left:578px;top:212px;width:53px;height:19px;background:#fff;border:1px solid #d6d6d6;"></div>
<span class="t" style="left:622.72px;top:214px;font-size:11.7px;line-height:13px;color:#000;letter-spacing:-0.134px;transform:scaleX(0.9700);transform-origin:0 0;">1</span>
<span class="t" style="left:634.50px;top:214px;font-size:11.7px;line-height:13px;color:#0a0a0a;letter-spacing:-0.178px;transform:scaleX(0.9049);transform-origin:0 0;">CENTRO DE MALAGA</span>
<div class="r" style="left:886px;top:210px;width:96px;height:23px;background:#fdfdfd;border:1px solid #9f9f9f;"></div>
<span class="t" style="left:894.50px;top:215px;font-size:11.7px;line-height:13px;color:#000000;letter-spacing:-0.074px;">Departamento:</span>
<div class="r" style="left:994px;top:212px;width:53px;height:19px;background:#fff;border:1px solid #d6d6d6;"></div>
<span class="t" style="left:1038.72px;top:214px;font-size:11.7px;line-height:13px;color:#000;letter-spacing:-0.134px;transform:scaleX(0.9700);transform-origin:0 0;">2</span>
<span class="t" style="left:1050.50px;top:214px;font-size:11.7px;line-height:13px;color:#0a0a0a;letter-spacing:-0.177px;transform:scaleX(0.9236);transform-origin:0 0;">MANTENIMIENTO</span>
<span class="t" style="left:422.20px;top:240px;font-size:11.7px;line-height:13px;color:#000000;letter-spacing:-0.163px;">Forma de cotización:</span>
<div class="r" style="left:578px;top:236px;width:693px;height:21px;background:#fff;border:1px solid #d0d0d0;"></div>
<div class="r" style="left:1254px;top:237px;width:16px;height:19px;background:#f0f0f0;"></div>
<svg class="r" style="left:1259px;top:244.7px" width="6" height="3" viewBox="0 0 6 3"><path d="M0 0h6l-3 3z" fill="#111"/></svg>
<span class="t" style="left:582.00px;top:240px;font-size:11.7px;line-height:13px;color:#0a0a0a;letter-spacing:-0.141px;transform:scaleX(0.9810);transform-origin:0 0;">General</span>
<div class="r" style="left:422px;top:258px;width:71px;height:23px;background:#fdfdfd;border:1px solid #9f9f9f;"></div>
<span class="t" style="left:431.00px;top:263px;font-size:11.7px;line-height:13px;color:#000000;letter-spacing:-0.135px;transform:scaleX(0.9785);transform-origin:0 0;">Convenio:</span>
<div class="r" style="left:578px;top:260px;width:53px;height:19px;background:#fff;border:1px solid #d6d6d6;"></div>
<span class="t" style="left:622.72px;top:262px;font-size:11.7px;line-height:13px;color:#000;letter-spacing:-0.134px;transform:scaleX(0.9700);transform-origin:0 0;">1</span>
<span class="t" style="left:634.50px;top:262px;font-size:11.7px;line-height:13px;color:#0a0a0a;letter-spacing:-0.167px;transform:scaleX(0.8865);transform-origin:0 0;">OFICINA Y DESPACHOS</span>
<span class="t" style="left:982.50px;top:264px;font-size:11.7px;line-height:13px;color:#000000;letter-spacing:-0.124px;transform:scaleX(0.9810);transform-origin:0 0;">Categoría:</span>
<div class="r" style="left:1050px;top:260px;width:221px;height:21px;background:#fff;border:1px solid #d0d0d0;"></div>
<div class="r" style="left:1254px;top:261px;width:16px;height:19px;background:#f0f0f0;"></div>
<svg class="r" style="left:1259px;top:268.7px" width="6" height="3" viewBox="0 0 6 3"><path d="M0 0h6l-3 3z" fill="#111"/></svg>
<span class="t" style="left:1054.00px;top:264px;font-size:11.7px;line-height:13px;color:#0a0a0a;letter-spacing:-0.170px;transform:scaleX(0.9134);transform-origin:0 0;">PEON LIMPIADORA</span>
<div class="r" style="left:422px;top:282px;width:126px;height:23px;background:#fdfdfd;border:1px solid #9f9f9f;"></div>
<span class="t" style="left:431.00px;top:287px;font-size:11.7px;line-height:13px;color:#000000;letter-spacing:-0.069px;">Grupo de cotización:</span>
<div class="r" style="left:578px;top:284px;width:53px;height:19px;background:#fff;border:1px solid #d6d6d6;"></div>
<span class="t" style="left:616.54px;top:286px;font-size:11.7px;line-height:13px;color:#000;letter-spacing:-0.268px;transform:scaleX(0.9700);transform-origin:0 0;">10</span>
<span class="t" style="left:634.50px;top:286px;font-size:11.7px;line-height:13px;color:#0a0a0a;letter-spacing:-0.169px;transform:scaleX(0.9398);transform-origin:0 0;">Peones</span>
<div class="r" style="left:422px;top:306px;width:133px;height:23px;background:#fdfdfd;border:1px solid #9f9f9f;"></div>
<span class="t" style="left:431.00px;top:311px;font-size:11.7px;line-height:13px;color:#000000;letter-spacing:-0.010px;">Código de ocupación:</span>
<div class="r" style="left:578px;top:308px;width:53px;height:19px;background:#fff;border:1px solid #d6d6d6;"></div>
<span class="t" style="left:406.50px;top:340px;font-size:11.7px;line-height:13px;color:#000000;letter-spacing:-0.111px;">Jornada de trabajo / Cotización a la Seguridad Social</span>
<span class="t" style="left:422.20px;top:364px;font-size:11.7px;line-height:13px;color:#000000;letter-spacing:-0.167px;">Forma de cobro:</span>
<div class="r" style="left:578px;top:360px;width:100px;height:21px;background:#fff;border:1px solid #d0d0d0;"></div>
<div class="r" style="left:661px;top:361px;width:16px;height:19px;background:#f0f0f0;"></div>
<svg class="r" style="left:666px;top:368.7px" width="6" height="3" viewBox="0 0 6 3"><path d="M0 0h6l-3 3z" fill="#111"/></svg>
<span class="t" style="left:582.00px;top:364px;font-size:11.7px;line-height:13px;color:#0a0a0a;letter-spacing:-0.130px;transform:scaleX(0.9761);transform-origin:0 0;">Por horas</span>
<span class="t" style="left:718.00px;top:364px;font-size:11.7px;line-height:13px;color:#000000;letter-spacing:0.070px;">Tipo jornada:</span>
<div class="r" style="left:798px;top:360px;width:172px;height:21px;background:#f4f4f4;border:1px solid #d0d0d0;"></div>
<div class="r" style="left:950px;top:361px;width:19px;height:19px;background:#f4f4f4;"></div>
<div class="r" style="left:800px;top:362px;width:150px;height:17px;background:#fbfbfb;"></div>
<svg class="r" style="left:958px;top:368.7px" width="6" height="3" viewBox="0 0 6 3"><path d="M0 0h6l-3 3z" fill="#9a9a9a"/></svg>
<span class="t" style="left:802.00px;top:364px;font-size:11.7px;line-height:13px;color:#7d7d7d;letter-spacing:-0.241px;">Normal</span>
<div class="r" style="left:974px;top:360px;width:45px;height:19px;background:#f3f3f3;border:1px solid #d6d6d6;"></div>
<span class="t" style="left:995.27px;top:362px;font-size:11.7px;line-height:13px;color:#7d7d7d;letter-spacing:-0.157px;transform:scaleX(0.9700);transform-origin:0 0;">0,00</span>
<span class="t" style="left:1050.50px;top:364px;font-size:11.7px;line-height:13px;color:#000000;letter-spacing:-0.062px;">Nº de horas de la jornada normal:</span>
<div class="r" style="left:1234px;top:360px;width:37px;height:19px;background:#fff;border:1px solid #d6d6d6;"></div>
<span class="t" style="left:1247.27px;top:362px;font-size:11.7px;line-height:13px;color:#000;letter-spacing:-0.157px;transform:scaleX(0.9700);transform-origin:0 0;">8,00</span>
<svg class="r" style="left:422px;top:388px" width="13" height="13" viewBox="0 0 13 13"><rect width="13" height="13" rx="3" fill="#0a5ab8"/><path d="M3.500 6.700l2.100 2.100 4-4.200" fill="none" stroke="#fff" stroke-width="1"/></svg>
<span class="t" style="left:438.50px;top:388px;font-size:11.7px;line-height:13px;color:#000000;letter-spacing:-0.140px;">Cotizar periodos de descanso</span>
<svg class="r" style="left:718px;top:388px" width="13" height="13" viewBox="0 0 13 13"><rect x="0.500" y="0.500" width="12" height="12" rx="3" fill="#f5f5f5" stroke="#5e5e5e"/></svg>
<span class="t" style="left:734.20px;top:388px;font-size:11.7px;line-height:13px;color:#000000;letter-spacing:-0.167px;">Reducción guarda legal / COVID-19</span>
<div class="r" style="left:930px;top:384px;width:341px;height:21px;background:#f4f4f4;border:1px solid #d0d0d0;"></div>
<div class="r" style="left:1251px;top:385px;width:19px;height:19px;background:#f4f4f4;"></div>
<div class="r" style="left:932px;top:386px;width:319px;height:17px;background:#fbfbfb;"></div>
<svg class="r" style="left:1259px;top:392.7px" width="6" height="3" viewBox="0 0 6 3"><path d="M0 0h6l-3 3z" fill="#9a9a9a"/></svg>
<span class="t" style="left:934.00px;top:388px;font-size:11.7px;line-height:13px;color:#7d7d7d;letter-spacing:-0.116px;transform:scaleX(0.9779);transform-origin:0 0;">Sin seleccionar</span>
<span class="t" style="left:406.50px;top:416px;font-size:11.7px;line-height:13px;color:#000000;letter-spacing:-0.112px;transform:scaleX(0.9789);transform-origin:0 0;">Nº de días / horas al mes</span>
<span class="t" style="left:638.50px;top:416px;font-size:11.7px;line-height:13px;color:#000000;letter-spacing:-0.090px;">Definición de días / horas trabajados en la semana</span>
<span class="t" style="left:1090.00px;top:416px;font-size:11.7px;line-height:13px;color:#000000;letter-spacing:-0.028px;">Jornada irregular</span>
<span class="t" style="left:422.20px;top:440px;font-size:11.7px;line-height:13px;color:#000000;letter-spacing:-0.122px;transform:scaleX(0.9707);transform-origin:0 0;">Nº días:</span>
<div class="r" style="left:578px;top:436px;width:41px;height:19px;background:#fff;border:1px solid #d6d6d6;"></div>
<span class="t" style="left:610.72px;top:438px;font-size:11.7px;line-height:13px;color:#000;letter-spacing:-0.134px;transform:scaleX(0.9700);transform-origin:0 0;">0</span>
<span class="t" style="left:422.20px;top:464px;font-size:11.7px;line-height:13px;color:#000000;letter-spacing:-0.149px;">Nº horas:</span>
<div class="r" style="left:578px;top:460px;width:41px;height:19px;background:#fff;border:1px solid #d6d6d6;"></div>
<span class="t" style="left:595.27px;top:462px;font-size:11.7px;line-height:13px;color:#000;letter-spacing:-0.157px;transform:scaleX(0.9700);transform-origin:0 0;">0,00</span>
<svg class="r" style="left:654px;top:440px" width="13" height="13" viewBox="0 0 13 13"><rect width="13" height="13" rx="3" fill="#0a5ab8"/><path d="M3.500 6.700l2.100 2.100 4-4.200" fill="none" stroke="#fff" stroke-width="1"/></svg>
<span class="t" style="left:670.20px;top:442px;font-size:10.5px;line-height:11px;color:#000000;letter-spacing:-0.040px;">L</span>
<div class="r" style="left:686px;top:436px;width:41px;height:19px;background:#fff;border:1px solid #d6d6d6;"></div>
<span class="t" style="left:703.27px;top:438px;font-size:11.7px;line-height:13px;color:#000;letter-spacing:-0.157px;transform:scaleX(0.9700);transform-origin:0 0;">2,00</span>
<svg class="r" style="left:746px;top:440px" width="13" height="13" viewBox="0 0 13 13"><rect width="13" height="13" rx="3" fill="#0a5ab8"/><path d="M3.500 6.700l2.100 2.100 4-4.200" fill="none" stroke="#fff" stroke-width="1"/></svg>
<span class="t" style="left:761.70px;top:442px;font-size:10.5px;line-height:11px;color:#000000;letter-spacing:-0.152px;transform:scaleX(0.9196);transform-origin:0 0;">X</span>
<div class="r" style="left:774px;top:436px;width:41px;height:19px;background:#fff;border:1px solid #d6d6d6;"></div>
<span class="t" style="left:791.27px;top:438px;font-size:11.7px;line-height:13px;color:#000;letter-spacing:-0.157px;transform:scaleX(0.9700);transform-origin:0 0;">4,00</span>
<svg class="r" style="left:834px;top:440px" width="13" height="13" viewBox="0 0 13 13"><rect width="13" height="13" rx="3" fill="#0a5ab8"/><path d="M3.500 6.700l2.100 2.100 4-4.200" fill="none" stroke="#fff" stroke-width="1"/></svg>
<span class="t" style="left:850.00px;top:442px;font-size:10.5px;line-height:11px;color:#000000;letter-spacing:-0.003px;">V</span>
<div class="r" style="left:862px;top:436px;width:41px;height:19px;background:#fff;border:1px solid #d6d6d6;"></div>
<span class="t" style="left:879.27px;top:438px;font-size:11.7px;line-height:13px;color:#000;letter-spacing:-0.157px;transform:scaleX(0.9700);transform-origin:0 0;">5,00</span>
<svg class="r" style="left:922px;top:440px" width="13" height="13" viewBox="0 0 13 13"><rect x="0.500" y="0.500" width="12" height="12" rx="3" fill="#f5f5f5" stroke="#5e5e5e"/></svg>
<span class="t" style="left:938.70px;top:442px;font-size:10.5px;line-height:11px;color:#000000;letter-spacing:-0.154px;transform:scaleX(0.9827);transform-origin:0 0;">D</span>
<div class="r" style="left:950px;top:436px;width:41px;height:19px;background:#f3f3f3;border:1px solid #d6d6d6;"></div>
<span class="t" style="left:967.27px;top:438px;font-size:11.7px;line-height:13px;color:#000;letter-spacing:-0.157px;transform:scaleX(0.9700);transform-origin:0 0;">0,00</span>
<svg class="r" style="left:654px;top:464px" width="13" height="13" viewBox="0 0 13 13"><rect x="0.500" y="0.500" width="12" height="12" rx="3" fill="#f5f5f5" stroke="#5e5e5e"/></svg>
<span class="t" style="left:670.20px;top:466px;font-size:10.5px;line-height:11px;color:#000000;letter-spacing:1.053px;">M</span>
<div class="r" style="left:686px;top:460px;width:41px;height:19px;background:#f3f3f3;border:1px solid #d6d6d6;"></div>
<span class="t" style="left:703.27px;top:462px;font-size:11.7px;line-height:13px;color:#000;letter-spacing:-0.157px;transform:scaleX(0.9700);transform-origin:0 0;">0,00</span>
<svg class="r" style="left:746px;top:464px" width="13" height="13" viewBox="0 0 13 13"><rect x="0.500" y="0.500" width="12" height="12" rx="3" fill="#f5f5f5" stroke="#5e5e5e"/></svg>
<span class="t" style="left:762.00px;top:466px;font-size:10.5px;line-height:11px;color:#000000;letter-spacing:-0.134px;transform:scaleX(0.7819);transform-origin:0 0;">J</span>
<div class="r" style="left:774px;top:460px;width:41px;height:19px;background:#f3f3f3;border:1px solid #d6d6d6;"></div>
<span class="t" style="left:791.27px;top:462px;font-size:11.7px;line-height:13px;color:#000;letter-spacing:-0.157px;transform:scaleX(0.9700);transform-origin:0 0;">0,00</span>
<svg class="r" style="left:834px;top:464px" width="13" height="13" viewBox="0 0 13 13"><rect x="0.500" y="0.500" width="12" height="12" rx="3" fill="#f5f5f5" stroke="#5e5e5e"/></svg>
<span class="t" style="left:850.00px;top:466px;font-size:10.5px;line-height:11px;color:#000000;letter-spacing:-0.160px;transform:scaleX(0.8767);transform-origin:0 0;">S</span>
<div class="r" style="left:862px;top:460px;width:41px;height:19px;background:#f3f3f3;border:1px solid #d6d6d6;"></div>
<span class="t" style="left:879.27px;top:462px;font-size:11.7px;line-height:13px;color:#000;letter-spacing:-0.157px;transform:scaleX(0.9700);transform-origin:0 0;">0,00</span>
<span class="t" style="left:922.00px;top:464px;font-size:11.7px;line-height:13px;color:#000000;letter-spacing:0.034px;">Incluir:</span>
<div class="r" style="left:974px;top:460px;width:109px;height:21px;background:#fff;border:1px solid #d0d0d0;"></div>
<div class="r" style="left:1066px;top:461px;width:16px;height:19px;background:#f0f0f0;"></div>
<svg class="r" style="left:1071px;top:468.7px" width="6" height="3" viewBox="0 0 6 3"><path d="M0 0h6l-3 3z" fill="#111"/></svg>
<span class="t" style="left:978.00px;top:464px;font-size:11.7px;line-height:13px;color:#0a0a0a;letter-spacing:-0.126px;transform:scaleX(0.9842);transform-origin:0 0;">Festivos</span>
<div class="r" style="left:1106px;top:436px;width:165px;height:23px;background:#f0f0f0;border:1px solid #a5a5a5;"></div>
<span class="t" style="left:1122.00px;top:440px;font-size:11.7px;line-height:13px;color:#000000;letter-spacing:-0.013px;">Ir al calendario de trabajo</span>
<span class="t" style="left:402.50px;top:724px;font-size:11.7px;line-height:13px;color:#000000;letter-spacing:-0.149px;transform:scaleX(0.9131);transform-origin:0 0;">CONTRATO 200.  SIN BONIFICACIÓN</span>
<span class="t" style="left:994.00px;top:724px;font-size:11.7px;line-height:13px;color:#000000;letter-spacing:-0.161px;transform:scaleX(0.9235);transform-origin:0 0;">EDAD: 38</span>
<span class="t" style="left:1163.20px;top:724px;font-size:11.7px;line-height:13px;color:#000000;letter-spacing:-0.155px;transform:scaleX(0.9035);transform-origin:0 0;">RETENCIÓN: 0,00 %</span>
</body></html>
